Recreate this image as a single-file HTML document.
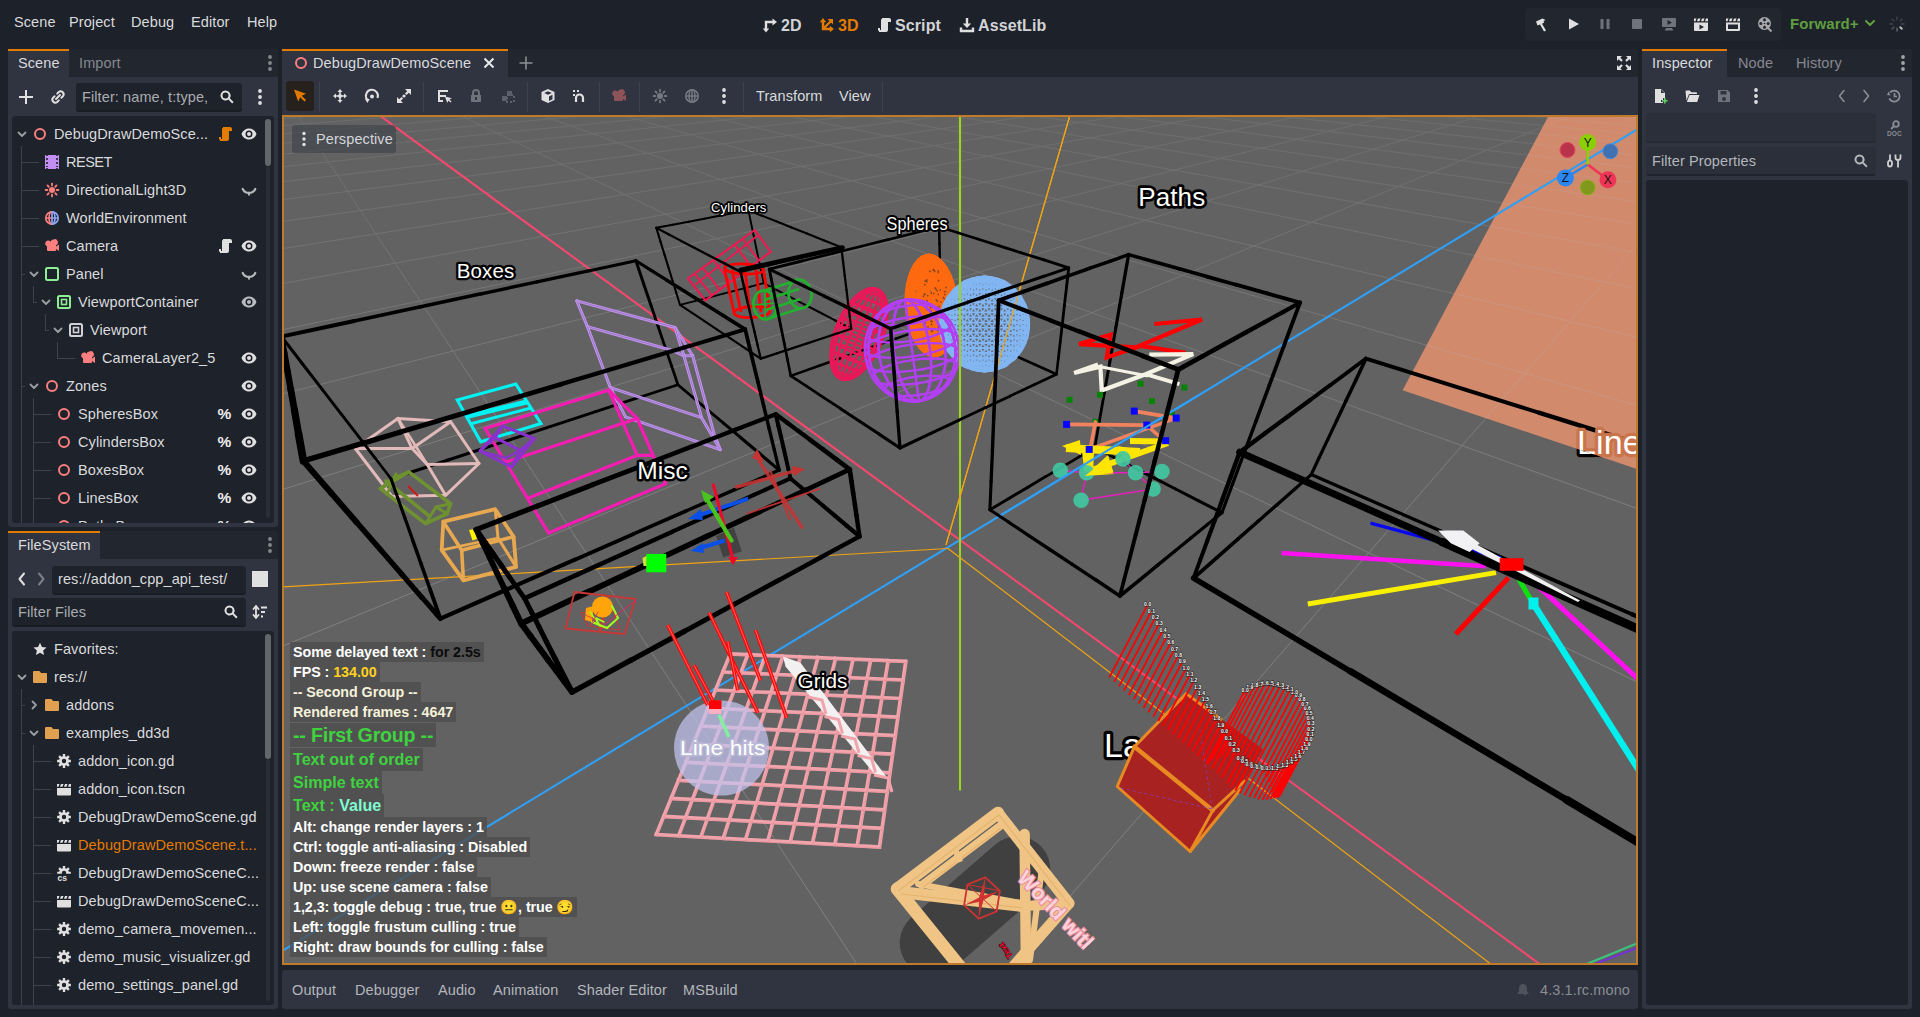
<!DOCTYPE html>
<html><head><meta charset="utf-8"><title>Godot</title><style>
*{box-sizing:border-box;margin:0;padding:0}
html,body{width:1920px;height:1017px;overflow:hidden;background:#1d2129;font-family:"Liberation Sans",sans-serif;font-size:14.500px;letter-spacing:.1px;color:#d9dadd}
.a{position:absolute}
.ic{position:absolute;overflow:visible}
.t{position:absolute;white-space:nowrap;line-height:20px;height:20px}
.dock{position:absolute;background:#2f3440;border-radius:3px}
.tabbar{position:absolute;background:#22262f;border-radius:3px 3px 0 0}
.tab{position:absolute;background:#2f3440;border-top:2px solid #e37b00}
.tree{position:absolute;background:#1e222a;border-radius:3px;overflow:hidden}
.inp{position:absolute;background:#1e222a;border-radius:3px;border-bottom:2px solid #191c23}
.ln{position:absolute;background:#3d424c}
.b{font-weight:700}
.emo{font-family:'Noto Color Emoji','Noto Emoji',sans-serif;font-weight:400;color:#f5c518}
.hud{position:absolute;white-space:nowrap;font-weight:700;font-size:14.600px;line-height:20px;height:20px;color:#fff;background:rgba(77,77,77,.8);padding:0 3px 0 3px}
.lbl{position:absolute;white-space:nowrap;color:#fff;font-weight:400;
 text-shadow:-2px 0 #000,2px 0 #000,0 -2px #000,0 2px #000,-1.500px -1.500px #000,1.500px -1.500px #000,-1.500px 1.500px #000,1.500px 1.500px #000,-1px -2px #000,1px -2px #000,-1px 2px #000,1px 2px #000,-2px -1px #000,2px -1px #000,-2px 1px #000,2px 1px #000}
</style></head><body>
<div class="t " style="left:14px;top:12px;">Scene</div>
<div class="t " style="left:69px;top:12px;">Project</div>
<div class="t " style="left:131px;top:12px;">Debug</div>
<div class="t " style="left:191px;top:12px;">Editor</div>
<div class="t " style="left:247px;top:12px;">Help</div>
<div class="t b" style="left:781px;top:15.5px;font-size:16px;color:#d2d3d6">2D</div>
<div class="t b" style="left:838px;top:15.5px;font-size:16px;color:#e37b00">3D</div>
<div class="t b" style="left:895px;top:15.5px;font-size:16px;color:#d2d3d6">Script</div>
<div class="t b" style="left:978px;top:15.5px;font-size:16px;color:#d2d3d6">AssetLib</div>
<svg class="ic" style="left:762px;top:17px" width="16" height="16" viewBox="0 0 16 16" ><path d="M4 12.500V5h7" fill="none" stroke="#e0e0e0" stroke-width="2.400"/><path d="M10.500 1.500l4.500 3.500-4.500 3.500z" fill="#e0e0e0"/><path d="M.8 11.500L4 15.500l3.200-4z" fill="#e0e0e0"/></svg>
<svg class="ic" style="left:819px;top:17px" width="16" height="16" viewBox="0 0 16 16" ><path d="M4 4v8h8" fill="none" stroke="#e37b00" stroke-width="2.400"/><path d="M4 12l7.500-7.500" stroke="#e37b00" stroke-width="2.400"/><path d="M.8 5.200L4 1l3.200 4.200zM10.800 8.800L15 12l-4.200 3.200zM8.500 2h5.500v5.500z" fill="#e37b00"/></svg>
<svg class="ic" style="left:876px;top:17px" width="16" height="16" viewBox="0 0 16 16" ><path d="M6 1v1a1 1 0 0 0-1 1v10H4v-2H2v2a1 1 0 0 0 .5.87 1 1 0 0 0 .5.13v1h7a2 2 0 0 0 2-2V5h3V3a2 2 0 0 0-2-2z" fill="#e0e0e0"/></svg>
<svg class="ic" style="left:959px;top:17px" width="16" height="16" viewBox="0 0 16 16" ><path d="M8 1v7" fill="none" stroke="#e0e0e0" stroke-width="2.400"/><path d="M3.800 6.500h8.400L8 11z" fill="#e0e0e0"/><path d="M2 10.500v3.500h12v-3.500" fill="none" stroke="#e0e0e0" stroke-width="2.400"/></svg>
<div class="a" style="left:1525px;top:8px;width:256px;height:33px;background:#22262f;border-radius:4px"></div>
<svg class="ic" style="left:1533px;top:16px" width="16" height="16" viewBox="0 0 16 16" ><path d="M3 5.500L9.500 2.500l3 1.500-2 1 .8 1.500-2.300 1.200L13 14.500 11 15.500 7 8.500 4.500 9.500z" fill="#e0e0e0"/></svg>
<svg class="ic" style="left:1565px;top:16px" width="16" height="16" viewBox="0 0 16 16" ><path d="M4 2.500v11l10-5.500z" fill="#e0e0e0"/></svg>
<svg class="ic" style="left:1597px;top:16px" width="16" height="16" viewBox="0 0 16 16" ><path d="M3.500 3h3v10h-3zM9.500 3h3v10h-3z" fill="#6f737b"/></svg>
<svg class="ic" style="left:1629px;top:16px" width="16" height="16" viewBox="0 0 16 16" ><rect x="3" y="3" width="10" height="10" rx="1" fill="#6f737b"/></svg>
<svg class="ic" style="left:1661px;top:16px" width="16" height="16" viewBox="0 0 16 16" ><path d="M2 2h12a1 1 0 0 1 1 1v7a1 1 0 0 1-1 1H2a1 1 0 0 1-1-1V3a1 1 0 0 1 1-1zm4.500 2v5L11 6.500zM5 12h6v1h1v1.500H4V13h1z" fill="#6f737b" fill-rule="evenodd"/></svg>
<svg class="ic" style="left:1693px;top:16px" width="16" height="16" viewBox="0 0 16 16" ><path d="M1 6.500h14V14a1 1 0 0 1-1 1H2a1 1 0 0 1-1-1zm5.500 2v5l4.500-2.500z" fill="#e0e0e0" fill-rule="evenodd"/><path d="M1 2.500h2.500l-1 2.800H1zM5 2.500h2.500l-1 2.800H4zM9 2.500h2.500l-1 2.800H8zM13 2.500h2v2.800h-3z" fill="#e0e0e0"/></svg>
<svg class="ic" style="left:1725px;top:16px" width="16" height="16" viewBox="0 0 16 16" ><path d="M1 6.500h14V14a1 1 0 0 1-1 1H2a1 1 0 0 1-1-1zm2 2v4.500h10V8.500z" fill="#e0e0e0" fill-rule="evenodd"/><path d="M1 2.500h2.500l-1 2.800H1zM5 2.500h2.500l-1 2.800H4zM9 2.500h2.500l-1 2.800H8zM13 2.500h2v2.800h-3z" fill="#e0e0e0"/></svg>
<svg class="ic" style="left:1757px;top:16px" width="16" height="16" viewBox="0 0 16 16" ><circle cx="7.500" cy="7.500" r="6.500" fill="#a4a6aa"/><g fill="#22262f"><circle cx="7.500" cy="3.800" r="1.500"/><circle cx="7.500" cy="11.200" r="1.500"/><circle cx="3.800" cy="7.500" r="1.500"/><circle cx="11.200" cy="7.500" r="1.500"/><circle cx="7.500" cy="7.500" r=".8"/></g><path d="M11 12l3.500 3.500" stroke="#a4a6aa" stroke-width="2"/></svg>
<div class="t b" style="left:1790px;top:14px;font-size:15px;color:#5f9e41">Forward+</div>
<svg class="ic" style="left:1862px;top:15px" width="16" height="16" viewBox="0 0 16 16" ><path d="M4 6l4 4 4-4" fill="none" stroke="#62a03f" stroke-width="2" stroke-linecap="round" stroke-linejoin="round"/></svg>
<svg class="ic" style="left:1889px;top:16px" width="16" height="16" viewBox="0 0 16 16" ><path d="M8.00 12.60L8.00 14.80" stroke="#50545c" stroke-width="2" stroke-linecap="round"/><path d="M11.25 11.25L12.81 12.81" stroke="#b8b8b8" stroke-width="2" stroke-linecap="round"/><path d="M12.60 8.00L14.80 8.00" stroke="#3a3e47" stroke-width="2" stroke-linecap="round"/><path d="M11.25 4.75L12.81 3.19" stroke="#343840" stroke-width="2" stroke-linecap="round"/><path d="M8.00 3.40L8.00 1.20" stroke="#343840" stroke-width="2" stroke-linecap="round"/><path d="M4.75 4.75L3.19 3.19" stroke="#343840" stroke-width="2" stroke-linecap="round"/><path d="M3.40 8.00L1.20 8.00" stroke="#3a3e47" stroke-width="2" stroke-linecap="round"/><path d="M4.75 11.25L3.19 12.81" stroke="#454950" stroke-width="2" stroke-linecap="round"/></svg>
<div class="dock" style="left:8px;top:49px;width:270px;height:478px;"></div>
<div class="tabbar" style="left:8px;top:49px;width:270px;height:28px;"></div>
<div class="tab" style="left:8px;top:49px;width:61px;height:28px;"></div>
<div class="t " style="left:18px;top:53px;">Scene</div>
<div class="t " style="left:79px;top:53px;color:#85888f">Import</div>
<svg class="ic" style="left:262px;top:55px" width="16" height="16" viewBox="0 0 16 16" ><circle cx="8" cy="2" r="1.900" fill="#85888f"/><circle cx="8" cy="8" r="1.900" fill="#85888f"/><circle cx="8" cy="14" r="1.900" fill="#85888f"/></svg>
<svg class="ic" style="left:18px;top:89px" width="16" height="16" viewBox="0 0 16 16" ><path d="M7 1v6H1v2h6v6h2V9h6V7H9V1z" fill="#e0e0e0"/></svg>
<svg class="ic" style="left:50px;top:89px" width="16" height="16" viewBox="0 0 16 16" ><g fill="none" stroke="#e0e0e0" stroke-width="2" stroke-linecap="round"><path d="M7.2 4.6l1.6-1.6a3 3 0 0 1 4.2 4.2l-1.6 1.6"/><path d="M8.8 11.4l-1.6 1.6a3 3 0 0 1-4.2-4.2l1.6-1.6"/><path d="M6 10l4-4"/></g></svg>
<div class="inp" style="left:76px;top:83px;width:166px;height:29px;"></div>
<div class="t " style="left:82px;top:87px;color:#a9acb1">Filter: name, t:type,</div>
<svg class="ic" style="left:219px;top:89px" width="16" height="16" viewBox="0 0 16 16" ><path d="M6.5 1.5a5 5 0 1 0 2.9 9.1l3.8 3.8 1.4-1.4-3.8-3.8a5 5 0 0 0-4.3-7.7zm0 2a3 3 0 1 1 0 6 3 3 0 0 1 0-6z" fill="#e0e0e0"/></svg>
<svg class="ic" style="left:252px;top:89px" width="16" height="16" viewBox="0 0 16 16" ><circle cx="8" cy="2" r="1.900" fill="#e0e0e0"/><circle cx="8" cy="8" r="1.900" fill="#e0e0e0"/><circle cx="8" cy="14" r="1.900" fill="#e0e0e0"/></svg>
<div class="tree" style="left:12px;top:116px;width:262px;height:407px">
<svg class="ic" style="left:2px;top:10px" width="16" height="16" viewBox="0 0 16 16" ><path d="M4.500 6.500L8 10l3.500-3.500" fill="none" stroke="#9a9da3" stroke-width="1.800" stroke-linecap="round" stroke-linejoin="round"/></svg>
<svg class="ic" style="left:20px;top:10px" width="16" height="16" viewBox="0 0 16 16" ><circle cx="8" cy="8" r="5" fill="none" stroke="#fc7f7f" stroke-width="2"/></svg>
<div class="t" style="left:42px;top:8px;">DebugDrawDemoSce...</div>
<svg class="ic" style="left:205px;top:10px" width="16" height="16" viewBox="0 0 16 16" ><path d="M6 1v1a1 1 0 0 0-1 1v10H4v-2H2v2a1 1 0 0 0 .5.87 1 1 0 0 0 .5.13v1h7a2 2 0 0 0 2-2V5h3V3a2 2 0 0 0-2-2z" fill="#e37b00"/></svg>
<svg class="ic" style="left:229px;top:10px" width="16" height="16" viewBox="0 0 16 16" ><path d="M8 2.5C4.4 2.500 1.500 5 .5 8c1 3 3.900 5.500 7.500 5.500s6.500-2.500 7.500-5.500c-1-3-3.900-5.500-7.500-5.500zm0 2a3.500 3.500 0 0 1 0 7 3.500 3.500 0 0 1 0-7zm0 1.500a2 2 0 0 0 0 4 2 2 0 0 0 0-4z" fill="#e0e0e0" fill-rule="evenodd"/></svg>
<svg class="ic" style="left:32px;top:38px" width="16" height="16" viewBox="0 0 16 16" ><path d="M1 1v14h1.200v-1h1.600v1h8.400v-1h1.600v1H15V1h-1.200v1h-1.600V1H3.800v1H2.200V1zm1.200 3h1.600v2H2.200zm10 0h1.600v2h-1.600zm-10 4h1.600v2H2.200zm10 0h1.600v2h-1.600zm-10 4h1.600v1H2.200zm10 0h1.600v1h-1.600z" fill="#c38ef1"/></svg>
<div class="t" style="left:54px;top:36px;"><span style="letter-spacing:-.5px">RESET</span></div>
<svg class="ic" style="left:32px;top:66px" width="16" height="16" viewBox="0 0 16 16" ><circle cx="8" cy="8" r="3" fill="#fc7f7f"/><path d="M12.60 8.00L14.40 8.00" stroke="#fc7f7f" stroke-width="1.800" stroke-linecap="round"/><path d="M11.25 11.25L12.53 12.53" stroke="#fc7f7f" stroke-width="1.800" stroke-linecap="round"/><path d="M8.00 12.60L8.00 14.40" stroke="#fc7f7f" stroke-width="1.800" stroke-linecap="round"/><path d="M4.75 11.25L3.47 12.53" stroke="#fc7f7f" stroke-width="1.800" stroke-linecap="round"/><path d="M3.40 8.00L1.60 8.00" stroke="#fc7f7f" stroke-width="1.800" stroke-linecap="round"/><path d="M4.75 4.75L3.47 3.47" stroke="#fc7f7f" stroke-width="1.800" stroke-linecap="round"/><path d="M8.00 3.40L8.00 1.60" stroke="#fc7f7f" stroke-width="1.800" stroke-linecap="round"/><path d="M11.25 4.75L12.53 3.47" stroke="#fc7f7f" stroke-width="1.800" stroke-linecap="round"/></svg>
<div class="t" style="left:54px;top:64px;">DirectionalLight3D</div>
<svg class="ic" style="left:229px;top:66px" width="16" height="16" viewBox="0 0 16 16" ><path d="M1.700 7c1.300 2.600 3.600 4 6.300 4s5-1.400 6.300-4" fill="none" stroke="#b5b7bb" stroke-width="2.200" stroke-linecap="round"/><path d="M8 10.500v2.200" stroke="#b5b7bb" stroke-width="2" stroke-linecap="round"/></svg>
<svg class="ic" style="left:32px;top:94px" width="16" height="16" viewBox="0 0 16 16" ><g fill="none" stroke-width="1.700"><path d="M8 1.800a6.200 6.200 0 0 0 0 12.400" stroke="#fc7f7f"/><path d="M8 1.800a6.200 6.200 0 0 1 0 12.400" stroke="#8da5f3"/><path d="M8 1.800a3 6.200 0 0 0 0 12.400" stroke="#fc7f7f"/><path d="M8 1.800a3 6.200 0 0 1 0 12.400" stroke="#8da5f3"/><path d="M1.800 8H8" stroke="#fc7f7f"/><path d="M8 8h6.200" stroke="#8da5f3"/><path d="M8 1.800v12.400" stroke="#8da5f3"/></g></svg>
<div class="t" style="left:54px;top:92px;">WorldEnvironment</div>
<svg class="ic" style="left:32px;top:122px" width="16" height="16" viewBox="0 0 16 16" ><path d="M9.5 1.500a3 3 0 0 0-2.900 2.300 3 3 0 1 0-3.600 4.500V12a1 1 0 0 0 1 1h7a1 1 0 0 0 1-1v-1l3 2V6.500l-3 2V7.200a3 3 0 0 0-2.500-5.700z" fill="#fc7f7f"/></svg>
<div class="t" style="left:54px;top:120px;">Camera</div>
<svg class="ic" style="left:205px;top:122px" width="16" height="16" viewBox="0 0 16 16" ><path d="M6 1v1a1 1 0 0 0-1 1v10H4v-2H2v2a1 1 0 0 0 .5.87 1 1 0 0 0 .5.13v1h7a2 2 0 0 0 2-2V5h3V3a2 2 0 0 0-2-2z" fill="#e0e0e0"/></svg>
<svg class="ic" style="left:229px;top:122px" width="16" height="16" viewBox="0 0 16 16" ><path d="M8 2.5C4.4 2.500 1.500 5 .5 8c1 3 3.900 5.500 7.500 5.500s6.500-2.500 7.500-5.500c-1-3-3.900-5.500-7.500-5.500zm0 2a3.500 3.500 0 0 1 0 7 3.500 3.500 0 0 1 0-7zm0 1.500a2 2 0 0 0 0 4 2 2 0 0 0 0-4z" fill="#e0e0e0" fill-rule="evenodd"/></svg>
<svg class="ic" style="left:14px;top:150px" width="16" height="16" viewBox="0 0 16 16" ><path d="M4.500 6.500L8 10l3.500-3.500" fill="none" stroke="#9a9da3" stroke-width="1.800" stroke-linecap="round" stroke-linejoin="round"/></svg>
<svg class="ic" style="left:32px;top:150px" width="16" height="16" viewBox="0 0 16 16" ><rect x="2" y="2" width="12" height="12" rx="1.500" fill="none" stroke="#8eef97" stroke-width="2"/></svg>
<div class="t" style="left:54px;top:148px;">Panel</div>
<svg class="ic" style="left:229px;top:150px" width="16" height="16" viewBox="0 0 16 16" ><path d="M1.700 7c1.300 2.600 3.600 4 6.300 4s5-1.400 6.300-4" fill="none" stroke="#b5b7bb" stroke-width="2.200" stroke-linecap="round"/><path d="M8 10.500v2.200" stroke="#b5b7bb" stroke-width="2" stroke-linecap="round"/></svg>
<svg class="ic" style="left:26px;top:178px" width="16" height="16" viewBox="0 0 16 16" ><path d="M4.500 6.500L8 10l3.500-3.500" fill="none" stroke="#9a9da3" stroke-width="1.800" stroke-linecap="round" stroke-linejoin="round"/></svg>
<svg class="ic" style="left:44px;top:178px" width="16" height="16" viewBox="0 0 16 16" ><rect x="2" y="2" width="12" height="12" rx="1.500" fill="none" stroke="#8eef97" stroke-width="2"/><rect x="5.500" y="5.500" width="5" height="5" fill="none" stroke="#8eef97" stroke-width="1.600"/></svg>
<div class="t" style="left:66px;top:176px;">ViewportContainer</div>
<svg class="ic" style="left:229px;top:178px" width="16" height="16" viewBox="0 0 16 16" ><path d="M8 2.5C4.4 2.500 1.500 5 .5 8c1 3 3.900 5.500 7.500 5.500s6.500-2.500 7.500-5.500c-1-3-3.900-5.500-7.500-5.500zm0 2a3.500 3.500 0 0 1 0 7 3.500 3.500 0 0 1 0-7zm0 1.500a2 2 0 0 0 0 4 2 2 0 0 0 0-4z" fill="#b9bbbf" fill-rule="evenodd"/></svg>
<svg class="ic" style="left:38px;top:206px" width="16" height="16" viewBox="0 0 16 16" ><path d="M4.500 6.500L8 10l3.500-3.500" fill="none" stroke="#9a9da3" stroke-width="1.800" stroke-linecap="round" stroke-linejoin="round"/></svg>
<svg class="ic" style="left:56px;top:206px" width="16" height="16" viewBox="0 0 16 16" ><rect x="2" y="2" width="12" height="12" rx="1.500" fill="none" stroke="#d0d2d6" stroke-width="2"/><rect x="5.500" y="5.500" width="5" height="5" fill="none" stroke="#d0d2d6" stroke-width="1.600"/></svg>
<div class="t" style="left:78px;top:204px;">Viewport</div>
<svg class="ic" style="left:68px;top:234px" width="16" height="16" viewBox="0 0 16 16" ><path d="M9.5 1.500a3 3 0 0 0-2.900 2.300 3 3 0 1 0-3.600 4.500V12a1 1 0 0 0 1 1h7a1 1 0 0 0 1-1v-1l3 2V6.500l-3 2V7.200a3 3 0 0 0-2.500-5.700z" fill="#fc7f7f"/></svg>
<div class="t" style="left:90px;top:232px;">CameraLayer2_5</div>
<svg class="ic" style="left:229px;top:234px" width="16" height="16" viewBox="0 0 16 16" ><path d="M8 2.5C4.4 2.500 1.500 5 .5 8c1 3 3.900 5.500 7.500 5.500s6.500-2.500 7.500-5.500c-1-3-3.900-5.500-7.500-5.500zm0 2a3.500 3.500 0 0 1 0 7 3.500 3.500 0 0 1 0-7zm0 1.500a2 2 0 0 0 0 4 2 2 0 0 0 0-4z" fill="#e0e0e0" fill-rule="evenodd"/></svg>
<svg class="ic" style="left:14px;top:262px" width="16" height="16" viewBox="0 0 16 16" ><path d="M4.500 6.500L8 10l3.500-3.500" fill="none" stroke="#9a9da3" stroke-width="1.800" stroke-linecap="round" stroke-linejoin="round"/></svg>
<svg class="ic" style="left:32px;top:262px" width="16" height="16" viewBox="0 0 16 16" ><circle cx="8" cy="8" r="5" fill="none" stroke="#fc7f7f" stroke-width="2"/></svg>
<div class="t" style="left:54px;top:260px;">Zones</div>
<svg class="ic" style="left:229px;top:262px" width="16" height="16" viewBox="0 0 16 16" ><path d="M8 2.5C4.4 2.500 1.500 5 .5 8c1 3 3.900 5.500 7.500 5.500s6.500-2.500 7.500-5.500c-1-3-3.900-5.500-7.500-5.500zm0 2a3.500 3.500 0 0 1 0 7 3.500 3.500 0 0 1 0-7zm0 1.500a2 2 0 0 0 0 4 2 2 0 0 0 0-4z" fill="#e0e0e0" fill-rule="evenodd"/></svg>
<svg class="ic" style="left:44px;top:290px" width="16" height="16" viewBox="0 0 16 16" ><circle cx="8" cy="8" r="5" fill="none" stroke="#fc7f7f" stroke-width="2"/></svg>
<div class="t" style="left:66px;top:288px;">SpheresBox</div>
<svg class="ic" style="left:229px;top:290px" width="16" height="16" viewBox="0 0 16 16" ><path d="M8 2.5C4.4 2.500 1.500 5 .5 8c1 3 3.900 5.500 7.500 5.500s6.500-2.500 7.500-5.500c-1-3-3.900-5.500-7.500-5.500zm0 2a3.500 3.500 0 0 1 0 7 3.500 3.500 0 0 1 0-7zm0 1.500a2 2 0 0 0 0 4 2 2 0 0 0 0-4z" fill="#e0e0e0" fill-rule="evenodd"/></svg>
<div class="t" style="left:205.5px;top:288px;font-size:15.500px;color:#ececec;font-weight:700;letter-spacing:0">%</div>
<svg class="ic" style="left:44px;top:318px" width="16" height="16" viewBox="0 0 16 16" ><circle cx="8" cy="8" r="5" fill="none" stroke="#fc7f7f" stroke-width="2"/></svg>
<div class="t" style="left:66px;top:316px;">CylindersBox</div>
<svg class="ic" style="left:229px;top:318px" width="16" height="16" viewBox="0 0 16 16" ><path d="M8 2.5C4.4 2.500 1.500 5 .5 8c1 3 3.900 5.500 7.500 5.500s6.500-2.500 7.500-5.500c-1-3-3.900-5.500-7.500-5.500zm0 2a3.500 3.500 0 0 1 0 7 3.500 3.500 0 0 1 0-7zm0 1.500a2 2 0 0 0 0 4 2 2 0 0 0 0-4z" fill="#e0e0e0" fill-rule="evenodd"/></svg>
<div class="t" style="left:205.5px;top:316px;font-size:15.500px;color:#ececec;font-weight:700;letter-spacing:0">%</div>
<svg class="ic" style="left:44px;top:346px" width="16" height="16" viewBox="0 0 16 16" ><circle cx="8" cy="8" r="5" fill="none" stroke="#fc7f7f" stroke-width="2"/></svg>
<div class="t" style="left:66px;top:344px;">BoxesBox</div>
<svg class="ic" style="left:229px;top:346px" width="16" height="16" viewBox="0 0 16 16" ><path d="M8 2.5C4.4 2.500 1.500 5 .5 8c1 3 3.900 5.500 7.500 5.500s6.500-2.500 7.500-5.500c-1-3-3.900-5.500-7.500-5.500zm0 2a3.500 3.500 0 0 1 0 7 3.500 3.500 0 0 1 0-7zm0 1.500a2 2 0 0 0 0 4 2 2 0 0 0 0-4z" fill="#e0e0e0" fill-rule="evenodd"/></svg>
<div class="t" style="left:205.5px;top:344px;font-size:15.500px;color:#ececec;font-weight:700;letter-spacing:0">%</div>
<svg class="ic" style="left:44px;top:374px" width="16" height="16" viewBox="0 0 16 16" ><circle cx="8" cy="8" r="5" fill="none" stroke="#fc7f7f" stroke-width="2"/></svg>
<div class="t" style="left:66px;top:372px;">LinesBox</div>
<svg class="ic" style="left:229px;top:374px" width="16" height="16" viewBox="0 0 16 16" ><path d="M8 2.5C4.4 2.500 1.500 5 .5 8c1 3 3.900 5.500 7.500 5.500s6.500-2.500 7.500-5.500c-1-3-3.900-5.500-7.500-5.500zm0 2a3.500 3.500 0 0 1 0 7 3.500 3.500 0 0 1 0-7zm0 1.500a2 2 0 0 0 0 4 2 2 0 0 0 0-4z" fill="#e0e0e0" fill-rule="evenodd"/></svg>
<div class="t" style="left:205.5px;top:372px;font-size:15.500px;color:#ececec;font-weight:700;letter-spacing:0">%</div>
<svg class="ic" style="left:44px;top:402px" width="16" height="16" viewBox="0 0 16 16" ><circle cx="8" cy="8" r="5" fill="none" stroke="#fc7f7f" stroke-width="2"/></svg>
<div class="t" style="left:66px;top:400px;">PathsBox</div>
<svg class="ic" style="left:229px;top:402px" width="16" height="16" viewBox="0 0 16 16" ><path d="M8 2.5C4.4 2.500 1.500 5 .5 8c1 3 3.900 5.500 7.500 5.500s6.500-2.500 7.500-5.500c-1-3-3.900-5.500-7.500-5.500zm0 2a3.500 3.500 0 0 1 0 7 3.500 3.500 0 0 1 0-7zm0 1.500a2 2 0 0 0 0 4 2 2 0 0 0 0-4z" fill="#e0e0e0" fill-rule="evenodd"/></svg>
<div class="t" style="left:205.5px;top:400px;font-size:15.500px;color:#ececec;font-weight:700;letter-spacing:0">%</div>
<div class="ln" style="left:9px;top:30px;width:1px;height:377px"></div>
<div class="ln" style="left:9px;top:46px;width:18px;height:1px"></div>
<div class="ln" style="left:9px;top:74px;width:18px;height:1px"></div>
<div class="ln" style="left:9px;top:102px;width:18px;height:1px"></div>
<div class="ln" style="left:9px;top:130px;width:18px;height:1px"></div>
<div class="ln" style="left:9px;top:158px;width:4px;height:1px"></div>
<div class="ln" style="left:9px;top:270px;width:4px;height:1px"></div>
<div class="ln" style="left:21px;top:170px;width:1px;height:16px"></div>
<div class="ln" style="left:21px;top:186px;width:4px;height:1px"></div>
<div class="ln" style="left:33px;top:198px;width:1px;height:16px"></div>
<div class="ln" style="left:33px;top:214px;width:4px;height:1px"></div>
<div class="ln" style="left:45px;top:226px;width:1px;height:16px"></div>
<div class="ln" style="left:45px;top:242px;width:18px;height:1px"></div>
<div class="ln" style="left:21px;top:282px;width:1px;height:125px"></div>
<div class="ln" style="left:21px;top:298px;width:18px;height:1px"></div>
<div class="ln" style="left:21px;top:326px;width:18px;height:1px"></div>
<div class="ln" style="left:21px;top:354px;width:18px;height:1px"></div>
<div class="ln" style="left:21px;top:382px;width:18px;height:1px"></div>
<div class="ln" style="left:21px;top:410px;width:18px;height:1px"></div>
<div class="a" style="left:253px;top:3px;width:6px;height:47px;background:#62656c;border-radius:3px"></div>
<div class="a" style="left:254px;top:50px;width:4px;height:352px;background:#2a2e37;border-radius:2px"></div>
</div>
<div class="dock" style="left:8px;top:531px;width:270px;height:478px;"></div>
<div class="tabbar" style="left:8px;top:531px;width:270px;height:28px;"></div>
<div class="tab" style="left:8px;top:531px;width:92px;height:28px;"></div>
<div class="t " style="left:18px;top:535px;">FileSystem</div>
<svg class="ic" style="left:262px;top:537px" width="16" height="16" viewBox="0 0 16 16" ><circle cx="8" cy="2" r="1.900" fill="#85888f"/><circle cx="8" cy="8" r="1.900" fill="#85888f"/><circle cx="8" cy="14" r="1.900" fill="#85888f"/></svg>
<svg class="ic" style="left:14px;top:571px" width="16" height="16" viewBox="0 0 16 16" ><path d="M10 2.500L5.500 8l4.500 5.500" fill="none" stroke="#e0e0e0" stroke-width="2" stroke-linecap="round" stroke-linejoin="round"/></svg>
<svg class="ic" style="left:33px;top:571px" width="16" height="16" viewBox="0 0 16 16" ><path d="M6 2.500L10.500 8 6 13.500" fill="none" stroke="#7b7e85" stroke-width="2" stroke-linecap="round" stroke-linejoin="round"/></svg>
<div class="inp" style="left:52px;top:566px;width:194px;height:29px;"></div>
<div class="t " style="left:58px;top:569px;">res://addon_cpp_api_test/</div>
<div class="a" style="left:252px;top:571px;width:16px;height:16px;background:#e0e0e0"></div>
<div class="inp" style="left:12px;top:598px;width:234px;height:29px;"></div>
<div class="t " style="left:18px;top:602px;color:#a9acb1">Filter Files</div>
<svg class="ic" style="left:223px;top:604px" width="16" height="16" viewBox="0 0 16 16" ><path d="M6.5 1.5a5 5 0 1 0 2.9 9.1l3.8 3.8 1.4-1.4-3.8-3.8a5 5 0 0 0-4.3-7.7zm0 2a3 3 0 1 1 0 6 3 3 0 0 1 0-6z" fill="#e0e0e0"/></svg>
<svg class="ic" style="left:252px;top:604px" width="16" height="16" viewBox="0 0 16 16" ><path d="M4 2v12M1.500 5L4 2l2.500 3M1.500 11L4 14l2.500-3" fill="none" stroke="#e0e0e0" stroke-width="1.800" stroke-linecap="round" stroke-linejoin="round"/><path d="M9 3.500h6M9 8h4M9 12.500h2" stroke="#e0e0e0" stroke-width="1.800"/></svg>
<div class="tree" style="left:12px;top:631px;width:262px;height:374px">
<svg class="ic" style="left:20px;top:10px" width="16" height="16" viewBox="0 0 16 16" ><path d="M8 1.700l1.950 4.200 4.550.500-3.400 3.100.950 4.500L8 11.700 3.950 14l.950-4.500-3.400-3.100 4.550-.500z" fill="#e0e0e0"/></svg>
<div class="t" style="left:42px;top:8px;">Favorites:</div>
<svg class="ic" style="left:2px;top:38px" width="16" height="16" viewBox="0 0 16 16" ><path d="M4.500 6.500L8 10l3.500-3.500" fill="none" stroke="#9a9da3" stroke-width="1.800" stroke-linecap="round" stroke-linejoin="round"/></svg>
<svg class="ic" style="left:20px;top:38px" width="16" height="16" viewBox="0 0 16 16" ><path d="M2 2a1 1 0 0 0-1 1v10a1 1 0 0 0 1 1h12a1 1 0 0 0 1-1V5a1 1 0 0 0-1-1H9L8 2.400A1 1 0 0 0 7.200 2z" fill="#e0a050"/></svg>
<div class="t" style="left:42px;top:36px;">res://</div>
<svg class="ic" style="left:14px;top:66px" width="16" height="16" viewBox="0 0 16 16" ><path d="M6.500 4.500L10 8l-3.500 3.500" fill="none" stroke="#9a9da3" stroke-width="1.800" stroke-linecap="round" stroke-linejoin="round"/></svg>
<svg class="ic" style="left:32px;top:66px" width="16" height="16" viewBox="0 0 16 16" ><path d="M2 2a1 1 0 0 0-1 1v10a1 1 0 0 0 1 1h12a1 1 0 0 0 1-1V5a1 1 0 0 0-1-1H9L8 2.400A1 1 0 0 0 7.200 2z" fill="#e0a050"/></svg>
<div class="t" style="left:54px;top:64px;">addons</div>
<svg class="ic" style="left:14px;top:94px" width="16" height="16" viewBox="0 0 16 16" ><path d="M4.500 6.500L8 10l3.500-3.500" fill="none" stroke="#9a9da3" stroke-width="1.800" stroke-linecap="round" stroke-linejoin="round"/></svg>
<svg class="ic" style="left:32px;top:94px" width="16" height="16" viewBox="0 0 16 16" ><path d="M2 2a1 1 0 0 0-1 1v10a1 1 0 0 0 1 1h12a1 1 0 0 0 1-1V5a1 1 0 0 0-1-1H9L8 2.400A1 1 0 0 0 7.200 2z" fill="#e0a050"/></svg>
<div class="t" style="left:54px;top:92px;">examples_dd3d</div>
<svg class="ic" style="left:44px;top:122px" width="16" height="16" viewBox="0 0 16 16" ><path d="M14.90 6.80L14.90 9.20L12.86 9.17L12.26 10.61L13.73 12.03L12.03 13.73L10.61 12.26L9.17 12.86L9.20 14.90L6.80 14.90L6.83 12.86L5.39 12.26L3.97 13.73L2.27 12.03L3.74 10.61L3.14 9.17L1.10 9.20L1.10 6.80L3.14 6.83L3.74 5.39L2.27 3.97L3.97 2.27L5.39 3.74L6.83 3.14L6.80 1.10L9.20 1.10L9.17 3.14L10.61 3.74L12.03 2.27L13.73 3.97L12.26 5.39L12.86 6.83zM8 5.800a2.200 2.200 0 0 1 0 4.400 2.200 2.200 0 0 1 0-4.400z" fill="#e0e0e0" fill-rule="evenodd"/></svg>
<div class="t" style="left:66px;top:120px;">addon_icon.gd</div>
<div class="ln" style="left:21px;top:130px;width:18px;height:1px"></div>
<svg class="ic" style="left:44px;top:150px" width="16" height="16" viewBox="0 0 16 16" ><path d="M1 7h14v6.500a1 1 0 0 1-1 1H2a1 1 0 0 1-1-1z" fill="#e0e0e0"/><path d="M1 3h2.500l-1 2.800H1zM5 3h2.500l-1 2.800H4zM9 3h2.500l-1 2.800H8zM13 3h2v2.800h-3z" fill="#e0e0e0"/></svg>
<div class="t" style="left:66px;top:148px;">addon_icon.tscn</div>
<div class="ln" style="left:21px;top:158px;width:18px;height:1px"></div>
<svg class="ic" style="left:44px;top:178px" width="16" height="16" viewBox="0 0 16 16" ><path d="M14.90 6.80L14.90 9.20L12.86 9.17L12.26 10.61L13.73 12.03L12.03 13.73L10.61 12.26L9.17 12.86L9.20 14.90L6.80 14.90L6.83 12.86L5.39 12.26L3.97 13.73L2.27 12.03L3.74 10.61L3.14 9.17L1.10 9.20L1.10 6.80L3.14 6.83L3.74 5.39L2.27 3.97L3.97 2.27L5.39 3.74L6.83 3.14L6.80 1.10L9.20 1.10L9.17 3.14L10.61 3.74L12.03 2.27L13.73 3.97L12.26 5.39L12.86 6.83zM8 5.800a2.200 2.200 0 0 1 0 4.400 2.200 2.200 0 0 1 0-4.400z" fill="#e0e0e0" fill-rule="evenodd"/></svg>
<div class="t" style="left:66px;top:176px;">DebugDrawDemoScene.gd</div>
<div class="ln" style="left:21px;top:186px;width:18px;height:1px"></div>
<svg class="ic" style="left:44px;top:206px" width="16" height="16" viewBox="0 0 16 16" ><path d="M1 7h14v6.500a1 1 0 0 1-1 1H2a1 1 0 0 1-1-1z" fill="#e0e0e0"/><path d="M1 3h2.500l-1 2.800H1zM5 3h2.500l-1 2.800H4zM9 3h2.500l-1 2.800H8zM13 3h2v2.800h-3z" fill="#e0e0e0"/></svg>
<div class="t" style="left:66px;top:204px;color:#e37b00">DebugDrawDemoScene.t...</div>
<div class="ln" style="left:21px;top:214px;width:18px;height:1px"></div>
<svg class="ic" style="left:44px;top:234px" width="16" height="16" viewBox="0 0 16 16" ><g clip-path="inset(0 0 45% 0)"><path d="M14.90 6.80L14.90 9.20L12.86 9.17L12.26 10.61L13.73 12.03L12.03 13.73L10.61 12.26L9.17 12.86L9.20 14.90L6.80 14.90L6.83 12.86L5.39 12.26L3.97 13.73L2.27 12.03L3.74 10.61L3.14 9.17L1.10 9.20L1.10 6.80L3.14 6.83L3.74 5.39L2.27 3.97L3.97 2.27L5.39 3.74L6.83 3.14L6.80 1.10L9.20 1.10L9.17 3.14L10.61 3.74L12.03 2.27L13.73 3.97L12.26 5.39L12.86 6.83zM8 5.800a2.200 2.200 0 0 1 0 4.400 2.200 2.200 0 0 1 0-4.400z" fill="#e0e0e0" fill-rule="evenodd"/></g><text x="1.500" y="15.500" font-family="Liberation Sans, sans-serif" font-weight="700" font-size="8.500" fill="#e0e0e0">cs</text></svg>
<div class="t" style="left:66px;top:232px;">DebugDrawDemoSceneC...</div>
<div class="ln" style="left:21px;top:242px;width:18px;height:1px"></div>
<svg class="ic" style="left:44px;top:262px" width="16" height="16" viewBox="0 0 16 16" ><path d="M1 7h14v6.500a1 1 0 0 1-1 1H2a1 1 0 0 1-1-1z" fill="#e0e0e0"/><path d="M1 3h2.500l-1 2.800H1zM5 3h2.500l-1 2.800H4zM9 3h2.500l-1 2.800H8zM13 3h2v2.800h-3z" fill="#e0e0e0"/></svg>
<div class="t" style="left:66px;top:260px;">DebugDrawDemoSceneC...</div>
<div class="ln" style="left:21px;top:270px;width:18px;height:1px"></div>
<svg class="ic" style="left:44px;top:290px" width="16" height="16" viewBox="0 0 16 16" ><path d="M14.90 6.80L14.90 9.20L12.86 9.17L12.26 10.61L13.73 12.03L12.03 13.73L10.61 12.26L9.17 12.86L9.20 14.90L6.80 14.90L6.83 12.86L5.39 12.26L3.97 13.73L2.27 12.03L3.74 10.61L3.14 9.17L1.10 9.20L1.10 6.80L3.14 6.83L3.74 5.39L2.27 3.97L3.97 2.27L5.39 3.74L6.83 3.14L6.80 1.10L9.20 1.10L9.17 3.14L10.61 3.74L12.03 2.27L13.73 3.97L12.26 5.39L12.86 6.83zM8 5.800a2.200 2.200 0 0 1 0 4.400 2.200 2.200 0 0 1 0-4.400z" fill="#e0e0e0" fill-rule="evenodd"/></svg>
<div class="t" style="left:66px;top:288px;">demo_camera_movemen...</div>
<div class="ln" style="left:21px;top:298px;width:18px;height:1px"></div>
<svg class="ic" style="left:44px;top:318px" width="16" height="16" viewBox="0 0 16 16" ><path d="M14.90 6.80L14.90 9.20L12.86 9.17L12.26 10.61L13.73 12.03L12.03 13.73L10.61 12.26L9.17 12.86L9.20 14.90L6.80 14.90L6.83 12.86L5.39 12.26L3.97 13.73L2.27 12.03L3.74 10.61L3.14 9.17L1.10 9.20L1.10 6.80L3.14 6.83L3.74 5.39L2.27 3.97L3.97 2.27L5.39 3.74L6.83 3.14L6.80 1.10L9.20 1.10L9.17 3.14L10.61 3.74L12.03 2.27L13.73 3.97L12.26 5.39L12.86 6.83zM8 5.800a2.200 2.200 0 0 1 0 4.400 2.200 2.200 0 0 1 0-4.400z" fill="#e0e0e0" fill-rule="evenodd"/></svg>
<div class="t" style="left:66px;top:316px;">demo_music_visualizer.gd</div>
<div class="ln" style="left:21px;top:326px;width:18px;height:1px"></div>
<svg class="ic" style="left:44px;top:346px" width="16" height="16" viewBox="0 0 16 16" ><path d="M14.90 6.80L14.90 9.20L12.86 9.17L12.26 10.61L13.73 12.03L12.03 13.73L10.61 12.26L9.17 12.86L9.20 14.90L6.80 14.90L6.83 12.86L5.39 12.26L3.97 13.73L2.27 12.03L3.74 10.61L3.14 9.17L1.10 9.20L1.10 6.80L3.14 6.83L3.74 5.39L2.27 3.97L3.97 2.27L5.39 3.74L6.83 3.14L6.80 1.10L9.20 1.10L9.17 3.14L10.61 3.74L12.03 2.27L13.73 3.97L12.26 5.39L12.86 6.83zM8 5.800a2.200 2.200 0 0 1 0 4.400 2.200 2.200 0 0 1 0-4.400z" fill="#e0e0e0" fill-rule="evenodd"/></svg>
<div class="t" style="left:66px;top:344px;">demo_settings_panel.gd</div>
<div class="ln" style="left:21px;top:354px;width:18px;height:1px"></div>
<div class="ln" style="left:9px;top:58px;width:1px;height:316px"></div>
<div class="ln" style="left:9px;top:74px;width:4px;height:1px"></div>
<div class="ln" style="left:9px;top:102px;width:4px;height:1px"></div>
<div class="ln" style="left:21px;top:114px;width:1px;height:260px"></div>
<div class="a" style="left:253px;top:3px;width:6px;height:125px;background:#62656c;border-radius:3px"></div>
<div class="a" style="left:254px;top:128px;width:4px;height:242px;background:#2a2e37;border-radius:2px"></div>
</div>
<div class="tabbar" style="left:282px;top:49px;width:1356px;height:28px;"></div>
<div class="tab" style="left:282px;top:49px;width:226px;height:28px;"></div>
<svg class="ic" style="left:293px;top:55px" width="16" height="16" viewBox="0 0 16 16" ><circle cx="8" cy="8" r="5" fill="none" stroke="#fc7f7f" stroke-width="2"/></svg>
<div class="t " style="left:313px;top:53px;">DebugDrawDemoScene</div>
<svg class="ic" style="left:481px;top:55px" width="16" height="16" viewBox="0 0 16 16" ><path d="M3.500 3.500l9 9M12.500 3.500l-9 9" stroke="#e8e8e8" stroke-width="2"/></svg>
<svg class="ic" style="left:518px;top:55px" width="16" height="16" viewBox="0 0 16 16" ><path d="M8 1.500v13M1.500 8h13" stroke="#8b8e95" stroke-width="1.600"/></svg>
<svg class="ic" style="left:1616px;top:55px" width="16" height="16" viewBox="0 0 16 16" ><path d="M1.500 6V1.500H6M10 1.500h4.500V6M14.500 10v4.500H10M6 14.500H1.500V10" fill="none" stroke="#e0e0e0" stroke-width="0"/><path d="M1 1h5L4.300 2.700 6.800 5.200 5.200 6.800 2.700 4.300 1 6zM15 1v5l-1.700-1.700-2.500 2.500-1.600-1.600 2.500-2.500L10 1zM1 15v-5l1.700 1.700 2.500-2.500 1.600 1.600-2.500 2.500L6 15zM15 15h-5l1.700-1.700-2.500-2.500 1.600-1.600 2.500 2.500L15 10z" fill="#e0e0e0"/></svg>
<div class="a" style="left:282px;top:77px;width:1356px;height:39px;background:#2f3440"></div>
<div class="a" style="left:286px;top:81px;width:28px;height:30px;background:#27211e;border-radius:3px"></div>
<svg class="ic" style="left:292px;top:88px" width="16" height="16" viewBox="0 0 16 16" ><path d="M2 1.500l4.200 12 2-4.300 4.300 4.300 1.500-1.500-4.300-4.300 4.300-2z" fill="#e37b00"/></svg>
<div class="a" style="left:319px;top:82px;width:1px;height:30px;background:#3c414d"></div>
<div class="a" style="left:423px;top:82px;width:1px;height:30px;background:#3c414d"></div>
<div class="a" style="left:527px;top:82px;width:1px;height:30px;background:#3c414d"></div>
<div class="a" style="left:599px;top:82px;width:1px;height:30px;background:#3c414d"></div>
<div class="a" style="left:639px;top:82px;width:1px;height:30px;background:#3c414d"></div>
<div class="a" style="left:743px;top:82px;width:1px;height:30px;background:#3c414d"></div>
<div class="a" style="left:882px;top:82px;width:1px;height:30px;background:#3c414d"></div>
<svg class="ic" style="left:332px;top:88px" width="16" height="16" viewBox="0 0 16 16" ><path d="M8 1L5.500 4h5zM8 15l-2.500-3h5zM1 8l3-2.500v5zM15 8l-3-2.500v5z" fill="#e0e0e0"/><path d="M8 3.500v9M3.500 8h9" stroke="#e0e0e0" stroke-width="1.600"/><circle cx="8" cy="8" r="2" fill="#e0e0e0"/></svg>
<svg class="ic" style="left:364px;top:88px" width="16" height="16" viewBox="0 0 16 16" ><path d="M3.200 11.500A6 6 0 1 1 13.500 10" fill="none" stroke="#e0e0e0" stroke-width="2"/><path d="M.8 10.500l5 .5-2.500 4z" fill="#e0e0e0"/><circle cx="8" cy="8.500" r="2" fill="#e0e0e0"/></svg>
<svg class="ic" style="left:396px;top:88px" width="16" height="16" viewBox="0 0 16 16" ><path d="M9 1h6v6l-2.200-2.200-2.300 2.300-1.600-1.600 2.300-2.300zM7 15H1V9l2.200 2.200 2.300-2.300 1.600 1.600-2.300 2.300z" fill="#e0e0e0"/><circle cx="8" cy="8" r="1.600" fill="#e0e0e0"/></svg>
<svg class="ic" style="left:436px;top:88px" width="16" height="16" viewBox="0 0 16 16" ><path d="M2 2h10v2H4v3h6v2H4v3h3v2H2z" fill="#e0e0e0"/><path d="M9 8.500l2.200 6.500 1.200-2.500 2.100 2.100 1-1-2.100-2.100 2.500-1.200z" fill="#e0e0e0"/></svg>
<svg class="ic" style="left:468px;top:88px" width="16" height="16" viewBox="0 0 16 16" ><path d="M3 7h10v7H3z" fill="#6e727b"/><path d="M5 7V5a3 3 0 0 1 6 0v2" fill="none" stroke="#6e727b" stroke-width="2"/><rect x="7" y="9" width="2" height="3" fill="#2f3440"/></svg>
<svg class="ic" style="left:500px;top:88px" width="16" height="16" viewBox="0 0 16 16" ><path d="M7 7h7v7H7z" fill="none" stroke="#5c606a" stroke-width="2" stroke-dasharray="2 2"/><path d="M2 8h5v5H2zM7 3h5v5H7z" fill="#5c606a"/></svg>
<svg class="ic" style="left:540px;top:88px" width="16" height="16" viewBox="0 0 16 16" ><path d="M8 1L1.500 4v8L8 15l6.500-3V4zM8 3.200l3.800 1.800L8 6.800 4.200 5zM9 8.500l3.500-1.700v4.400L9 12.900z" fill="#e0e0e0" fill-rule="evenodd"/></svg>
<svg class="ic" style="left:572px;top:88px" width="16" height="16" viewBox="0 0 16 16" ><path d="M4 14V10a3.500 3.500 0 0 1 7 0v4" fill="none" stroke="#e0e0e0" stroke-width="2.200"/><path d="M1 2h2v2H1zM5 2h2v2H5zM1 6h2v2H1z" fill="#e0e0e0"/></svg>
<svg class="ic" style="left:611px;top:88px" width="16" height="16" viewBox="0 0 16 16" ><path d="M9.5 1.500a3 3 0 0 0-2.900 2.300 3 3 0 1 0-3.600 4.500V12a1 1 0 0 0 1 1h7a1 1 0 0 0 1-1v-1l3 2V6.500l-3 2V7.200a3 3 0 0 0-2.500-5.700z" fill="#8d5358"/></svg>
<svg class="ic" style="left:652px;top:88px" width="16" height="16" viewBox="0 0 16 16" ><circle cx="8" cy="8" r="3" fill="#747881"/><path d="M12.60 8.00L14.40 8.00" stroke="#747881" stroke-width="1.800" stroke-linecap="round"/><path d="M11.25 11.25L12.53 12.53" stroke="#747881" stroke-width="1.800" stroke-linecap="round"/><path d="M8.00 12.60L8.00 14.40" stroke="#747881" stroke-width="1.800" stroke-linecap="round"/><path d="M4.75 11.25L3.47 12.53" stroke="#747881" stroke-width="1.800" stroke-linecap="round"/><path d="M3.40 8.00L1.60 8.00" stroke="#747881" stroke-width="1.800" stroke-linecap="round"/><path d="M4.75 4.75L3.47 3.47" stroke="#747881" stroke-width="1.800" stroke-linecap="round"/><path d="M8.00 3.40L8.00 1.60" stroke="#747881" stroke-width="1.800" stroke-linecap="round"/><path d="M11.25 4.75L12.53 3.47" stroke="#747881" stroke-width="1.800" stroke-linecap="round"/></svg>
<svg class="ic" style="left:684px;top:88px" width="16" height="16" viewBox="0 0 16 16" ><g fill="none" stroke="#747881" stroke-width="1.600"><circle cx="8" cy="8" r="6.200"/><path d="M8 1.800v12.400M1.800 8h12.400"/><ellipse cx="8" cy="8" rx="3" ry="6.200"/></g></svg>
<svg class="ic" style="left:716px;top:88px" width="16" height="16" viewBox="0 0 16 16" ><circle cx="8" cy="2" r="1.900" fill="#e0e0e0"/><circle cx="8" cy="8" r="1.900" fill="#e0e0e0"/><circle cx="8" cy="14" r="1.900" fill="#e0e0e0"/></svg>
<div class="t " style="left:756px;top:86px;">Transform</div>
<div class="t " style="left:839px;top:86px;">View</div>
<svg class="a" style="left:0;top:0" width="1920" height="1017" viewBox="0 0 1920 1017"><defs><clipPath id="vp"><rect x="283" y="116" width="1354" height="848"/></clipPath></defs><g clip-path="url(#vp)" fill="none"><rect x="282" y="115" width="1356" height="850" fill="#626262"/><path d="M1549 115L1640 115L1640 470L1402.6 390.2Z" fill="#d28a6c"/><defs><linearGradient id="gg" x1="0" y1="117" x2="0" y2="520" gradientUnits="userSpaceOnUse"><stop offset="0" stop-color="#fff" stop-opacity=".38"/><stop offset="1" stop-color="#fff" stop-opacity="1"/></linearGradient><mask id="gm" maskUnits="userSpaceOnUse" x="280" y="110" width="1360" height="860"><rect x="280" y="110" width="1360" height="860" fill="url(#gg)"/></mask></defs><path mask="url(#gm)" d="M995.9 26.8L-7360.4 281.6M995.9 26.8L200851.7 6747.2M1005.7 27.2L-8538.1 325.2M986.2 27.1L313268.9 10784.5M1015.7 27.5L-10148.9 384.9M976.1 27.4L305620.3 10784.5M1026.0 27.8L-12485.5 471.4M965.9 27.7L297971.7 10784.5M1036.5 28.2L-16181.2 608.3M955.4 28.1L290323.1 10784.5M1047.3 28.6L-22907.7 857.4M944.7 28.4L282674.5 10784.5M1058.4 28.9L-38985.7 1452.8M933.7 28.7L275025.9 10784.5M1069.8 29.3L-128374.7 4763.2M922.4 29.1L267377.3 10784.5M1081.5 29.7L-284629.3 10784.5M910.8 29.4L259728.8 10784.5M1093.6 30.1L-276232.4 10784.5M899.0 29.8L252080.2 10784.5M1106.0 30.5L-267835.6 10784.5M886.8 30.2L244431.6 10784.5M1118.7 31.0L-259438.7 10784.5M874.3 30.5L236783.0 10784.5M1131.8 31.4L-251041.9 10784.5M861.5 30.9L229134.4 10784.5M1145.3 31.8L-242645.0 10784.5M848.4 31.3L221485.8 10784.5M1159.3 32.3L-234248.2 10784.5M834.9 31.7L213837.2 10784.5M1173.6 32.8L-225851.3 10784.5M821.1 32.2L206188.6 10784.5M1188.4 33.3L-217454.5 10784.5M806.8 32.6L198540.0 10784.5M1203.6 33.8L-209057.6 10784.5M792.2 33.0L190891.5 10784.5M1219.4 34.3L-200660.8 10784.5M777.1 33.5L183242.9 10784.5M1235.7 34.9L-192263.9 10784.5M761.6 34.0L175594.3 10784.5M1252.5 35.5L-183867.1 10784.5M745.7 34.5L167945.7 10784.5M1269.8 36.0L-175470.2 10784.5M729.2 35.0L160297.1 10784.5M1287.8 36.6L-167073.4 10784.5M712.3 35.5L152648.5 10784.5M1306.4 37.3L-158676.5 10784.5M694.9 36.0L144999.9 10784.5M1325.6 37.9L-150279.7 10784.5M676.9 36.6L137351.3 10784.5M1345.6 38.6L-141882.8 10784.5M658.3 37.1L129702.8 10784.5M1366.2 39.3L-133486.0 10784.5M639.2 37.7L122054.2 10784.5M1387.7 40.0L-125089.1 10784.5M619.4 38.3L114405.6 10784.5M1410.0 40.7L-116692.3 10784.5M599.0 38.9L106757.0 10784.5M1433.1 41.5L-108295.4 10784.5M577.8 39.6L99108.4 10784.5M1457.2 42.3L-99898.5 10784.5M556.0 40.2L91459.8 10784.5M1482.2 43.2L-91501.7 10784.5M533.4 40.9L83811.2 10784.5M1508.3 44.1L-83104.8 10784.5M509.9 41.6L76162.6 10784.5M1535.5 45.0L-74708.0 10784.5M485.7 42.4L68514.0 10784.5M1563.8 45.9L-66311.1 10784.5M460.5 43.2L60865.5 10784.5M1593.5 46.9L-57914.3 10784.5M434.4 43.9L53216.9 10784.5M1624.4 48.0L-49517.4 10784.5M407.3 44.8L45568.3 10784.5M1656.8 49.0L-41120.6 10784.5M379.1 45.6L37919.7 10784.5M1690.7 50.2L-32723.7 10784.5M349.8 46.5L30271.1 10784.5M1726.2 51.4L-24326.9 10784.5M319.3 47.5L22622.5 10784.5M1763.5 52.6L-15930.0 10784.5M287.6 48.4L14973.9 10784.5M1802.7 54.0L-7533.2 10784.5M254.4 49.4L7325.3 10784.5M1844.0 55.3L863.7 10784.5M219.9 50.5L-323.3 10784.5M1887.4 56.8L9260.5 10784.5M183.8 51.6L-7971.8 10784.5M1933.3 58.3L17657.4 10784.5M146.1 52.7L-15620.4 10784.5M1981.7 60.0L26054.2 10784.5M106.7 53.9L-23269.0 10784.5M2033.0 61.7L34451.1 10784.5M65.4 55.2L-30917.6 10784.5M2087.4 63.5L42847.9 10784.5M22.1 56.5L-38566.2 10784.5M2145.1 65.5L51244.8 10784.5M-23.4 57.9L-46214.8 10784.5M2206.5 67.5L59641.7 10784.5M-71.2 59.4L-53863.4 10784.5M2272.0 69.7L68038.5 10784.5M-121.5 60.9L-61512.0 10784.5M2341.9 72.1L76435.4 10784.5M-174.6 62.5L-69160.6 10784.5M2416.8 74.6L84832.2 10784.5M-230.5 64.2L-76809.1 10784.5M2497.1 77.3L93229.1 10784.5M-289.6 66.0L-84457.7 10784.5M2583.6 80.2L101625.9 10784.5M-352.2 67.9L-92106.3 10784.5M2676.9 83.3L110022.8 10784.5M-418.6 70.0L-99754.9 10784.5M2777.8 86.7L118419.6 10784.5M-489.1 72.1L-107403.5 10784.5M2887.4 90.4L126816.5 10784.5M-564.1 74.4L-115052.1 10784.5M3006.9 94.4L135213.3 10784.5M-644.1 76.8L-122700.7 10784.5M3137.6 98.8L143610.2 10784.5M-729.6 79.4L-130349.3 10784.5M3281.1 103.7L152007.0 10784.5M-821.1 82.2L-137997.8 10784.5M3439.5 109.0L160403.9 10784.5M-919.4 85.2L-145646.4 10784.5M3615.2 114.9L168800.7 10784.5M-1025.2 88.5L-153295.0 10784.5M3811.2 121.5L177197.6 10784.5M-1139.4 91.9L-160943.6 10784.5M4031.3 128.9L185594.4 10784.5M-1263.1 95.7L-168592.2 10784.5M4280.0 137.3L193991.3 10784.5M-1397.4 99.8L-176240.8 10784.5M4563.6 146.8L202388.1 10784.5M-1543.9 104.3L-183889.4 10784.5M4889.8 157.8L210785.0 10784.5M-1704.2 109.2L-191538.0 10784.5M5268.9 170.5L219181.8 10784.5M-1880.4 114.5L-199186.6 10784.5M5715.1 185.5L227578.7 10784.5M-2074.9 120.5L-206835.1 10784.5M6247.9 203.4L235975.6 10784.5M-2290.9 127.0L-214483.7 10784.5M6895.2 225.2L244372.4 10784.5M-2532.1 134.4L-222132.3 10784.5M7698.2 252.2L252769.3 10784.5M-2803.1 142.7L-229780.9 10784.5M8720.9 286.6L261166.1 10784.5M-3109.8 152.0L-237429.5 10784.5M10067.8 331.9L269563.0 10784.5M-3459.9 162.7L-245078.1 10784.5M11922.0 394.2L277959.8 10784.5M-3863.1 175.0L-252726.7 10784.5M14636.8 485.5L286356.7 10784.5M-4332.6 189.3L-260375.3 10784.5M18992.1 632.0L294753.5 10784.5M-4886.2 206.2L-268023.9 10784.5M27118.8 905.2L303150.4 10784.5M-5548.7 226.4L-275672.4 10784.5M47656.2 1595.8L311547.2 10784.5M-6355.7 251.0L-283321.0 10784.5M200851.7 6747.2L319944.1 10784.5M-7360.4 281.6L-290969.6 10784.5" stroke="#b4b4b4" stroke-width="1" opacity=".36"/><path d="M379 115L1540 964.3" stroke="#f4486f" stroke-width="2.1" stroke-linecap="butt"/><path d="M280 952.4L1640 127.6" stroke="#2f9ff7" stroke-width="2.1" stroke-linecap="butt"/><path d="M960 115L960 790.6" stroke="#9bd321" stroke-width="2.1" stroke-linecap="butt"/><path d="M1070 115L946 545" stroke="#f0a414" stroke-width="1.2" stroke-linecap="butt"/><path d="M282 587L948 548.5" stroke="#f0a414" stroke-width="1.2" stroke-linecap="butt"/><path d="M948 548.5L1492 965" stroke="#f0a414" stroke-width="1.2" stroke-linecap="butt"/><path d="M763.7 283.1L776.5 289.9" stroke="#000" stroke-width="1.8" stroke-linecap="round"/><path d="M776.5 289.9L790 296.9" stroke="#000" stroke-width="1.9" stroke-linecap="round"/><path d="M790 296.9L804.2 304.3" stroke="#000" stroke-width="1.9" stroke-linecap="round"/><path d="M804.2 304.3L819.1 312" stroke="#000" stroke-width="2.0" stroke-linecap="round"/><path d="M819.1 312L834.7 320.2" stroke="#000" stroke-width="2.0" stroke-linecap="round"/><path d="M834.7 320.2L851.3 328.8" stroke="#000" stroke-width="2.1" stroke-linecap="round"/><path d="M763.7 283.1L761.3 271.7" stroke="#000" stroke-width="1.8" stroke-linecap="round"/><path d="M761.3 271.7L758.8 260.1" stroke="#000" stroke-width="1.9" stroke-linecap="round"/><path d="M758.8 260.1L756.3 248.1" stroke="#000" stroke-width="1.9" stroke-linecap="round"/><path d="M756.3 248.1L753.7 235.8" stroke="#000" stroke-width="1.9" stroke-linecap="round"/><path d="M753.7 235.8L751.1 223.2" stroke="#000" stroke-width="1.9" stroke-linecap="round"/><path d="M751.1 223.2L748.4 210.3" stroke="#000" stroke-width="1.9" stroke-linecap="round"/><path d="M763.7 283.1L750.6 286.6" stroke="#000" stroke-width="1.8" stroke-linecap="round"/><path d="M750.6 286.6L737.1 290.1" stroke="#000" stroke-width="1.9" stroke-linecap="round"/><path d="M737.1 290.1L723.4 293.6" stroke="#000" stroke-width="1.9" stroke-linecap="round"/><path d="M723.4 293.6L709.3 297.3" stroke="#000" stroke-width="1.9" stroke-linecap="round"/><path d="M709.3 297.3L694.8 301.1" stroke="#000" stroke-width="1.9" stroke-linecap="round"/><path d="M694.8 301.1L680 304.9" stroke="#000" stroke-width="1.9" stroke-linecap="round"/><path d="M941.2 322.6L958.1 330.2" stroke="#000" stroke-width="2.3" stroke-linecap="round"/><path d="M958.1 330.2L975.9 338.1" stroke="#000" stroke-width="2.3" stroke-linecap="round"/><path d="M975.9 338.1L994.6 346.5" stroke="#000" stroke-width="2.4" stroke-linecap="round"/><path d="M994.6 346.5L1014.2 355.2" stroke="#000" stroke-width="2.4" stroke-linecap="round"/><path d="M1014.2 355.2L1034.8 364.5" stroke="#000" stroke-width="2.5" stroke-linecap="round"/><path d="M1034.8 364.5L1056.5 374.2" stroke="#000" stroke-width="2.6" stroke-linecap="round"/><path d="M941.2 322.6L940.9 307.9" stroke="#000" stroke-width="2.3" stroke-linecap="round"/><path d="M940.9 307.9L940.5 292.8" stroke="#000" stroke-width="2.3" stroke-linecap="round"/><path d="M940.5 292.8L940.2 277.2" stroke="#000" stroke-width="2.3" stroke-linecap="round"/><path d="M940.2 277.2L939.9 261" stroke="#000" stroke-width="2.4" stroke-linecap="round"/><path d="M939.9 261L939.5 244.2" stroke="#000" stroke-width="2.4" stroke-linecap="round"/><path d="M939.5 244.2L939.1 226.9" stroke="#000" stroke-width="2.5" stroke-linecap="round"/><path d="M941.2 322.6L919.1 330.4" stroke="#000" stroke-width="2.3" stroke-linecap="round"/><path d="M919.1 330.4L896 338.6" stroke="#000" stroke-width="2.3" stroke-linecap="round"/><path d="M896 338.6L871.7 347.2" stroke="#000" stroke-width="2.4" stroke-linecap="round"/><path d="M871.7 347.2L846.1 356.2" stroke="#000" stroke-width="2.4" stroke-linecap="round"/><path d="M846.1 356.2L819.2 365.8" stroke="#000" stroke-width="2.5" stroke-linecap="round"/><path d="M819.2 365.8L790.8 375.9" stroke="#000" stroke-width="2.6" stroke-linecap="round"/><path d="M677.9 384.7L692.1 396.7" stroke="#000" stroke-width="2.7" stroke-linecap="round"/><path d="M692.1 396.7L707.3 409.5" stroke="#000" stroke-width="2.8" stroke-linecap="round"/><path d="M707.3 409.5L723.5 423.1" stroke="#000" stroke-width="2.9" stroke-linecap="round"/><path d="M723.5 423.1L740.8 437.7" stroke="#000" stroke-width="3.0" stroke-linecap="round"/><path d="M740.8 437.7L759.3 453.3" stroke="#000" stroke-width="3.1" stroke-linecap="round"/><path d="M759.3 453.3L779.2 470.1" stroke="#000" stroke-width="3.2" stroke-linecap="round"/><path d="M677.9 384.7L671.7 366.3" stroke="#000" stroke-width="2.7" stroke-linecap="round"/><path d="M671.7 366.3L665.1 347.1" stroke="#000" stroke-width="2.8" stroke-linecap="round"/><path d="M665.1 347.1L658.3 327" stroke="#000" stroke-width="2.8" stroke-linecap="round"/><path d="M658.3 327L651.2 305.9" stroke="#000" stroke-width="2.9" stroke-linecap="round"/><path d="M651.2 305.9L643.7 283.9" stroke="#000" stroke-width="3.0" stroke-linecap="round"/><path d="M643.7 283.9L635.9 260.7" stroke="#000" stroke-width="3.0" stroke-linecap="round"/><path d="M677.9 384.7L638.2 397.7" stroke="#000" stroke-width="2.7" stroke-linecap="round"/><path d="M638.2 397.7L595.7 411.6" stroke="#000" stroke-width="2.8" stroke-linecap="round"/><path d="M595.7 411.6L550.1 426.6" stroke="#000" stroke-width="2.9" stroke-linecap="round"/><path d="M550.1 426.6L501.1 442.6" stroke="#000" stroke-width="3.0" stroke-linecap="round"/><path d="M501.1 442.6L448.2 460" stroke="#000" stroke-width="3.1" stroke-linecap="round"/><path d="M448.2 460L391 478.7" stroke="#000" stroke-width="3.3" stroke-linecap="round"/><path d="M1094.8 447.6L1113.7 457.3" stroke="#000" stroke-width="2.7" stroke-linecap="round"/><path d="M1113.7 457.3L1133.4 467.4" stroke="#000" stroke-width="2.8" stroke-linecap="round"/><path d="M1133.4 467.4L1154 477.9" stroke="#000" stroke-width="2.9" stroke-linecap="round"/><path d="M1154 477.9L1175.6 489" stroke="#000" stroke-width="2.9" stroke-linecap="round"/><path d="M1175.6 489L1198.2 500.6" stroke="#000" stroke-width="3.0" stroke-linecap="round"/><path d="M1198.2 500.6L1221.9 512.7" stroke="#000" stroke-width="3.1" stroke-linecap="round"/><path d="M1094.8 447.6L1099.4 421" stroke="#000" stroke-width="2.7" stroke-linecap="round"/><path d="M1099.4 421L1104.4 392.5" stroke="#000" stroke-width="2.8" stroke-linecap="round"/><path d="M1104.4 392.5L1109.8 361.9" stroke="#000" stroke-width="3.0" stroke-linecap="round"/><path d="M1109.8 361.9L1115.6 328.9" stroke="#000" stroke-width="3.1" stroke-linecap="round"/><path d="M1115.6 328.9L1121.8 293.2" stroke="#000" stroke-width="3.2" stroke-linecap="round"/><path d="M1121.8 293.2L1128.6 254.6" stroke="#000" stroke-width="3.3" stroke-linecap="round"/><path d="M1094.8 447.6L1079.1 456.9" stroke="#000" stroke-width="2.7" stroke-linecap="round"/><path d="M1079.1 456.9L1062.8 466.6" stroke="#000" stroke-width="2.8" stroke-linecap="round"/><path d="M1062.8 466.6L1045.7 476.6" stroke="#000" stroke-width="2.8" stroke-linecap="round"/><path d="M1045.7 476.6L1027.9 487.2" stroke="#000" stroke-width="2.9" stroke-linecap="round"/><path d="M1027.9 487.2L1009.3 498.2" stroke="#000" stroke-width="3.0" stroke-linecap="round"/><path d="M1009.3 498.2L989.9 509.7" stroke="#000" stroke-width="3.0" stroke-linecap="round"/><path d="M1311.2 474.6L1451.2 535.5" stroke="#000" stroke-width="3.3" stroke-linecap="round"/><path d="M1451.2 535.5L1632.5 614.4" stroke="#000" stroke-width="3.8" stroke-linecap="round"/><path d="M1632.5 614.4L1876.7 720.7" stroke="#000" stroke-width="4.4" stroke-linecap="round"/><path d="M1876.7 720.7L2223.1 871.4" stroke="#000" stroke-width="5.2" stroke-linecap="round"/><path d="M2223.1 871.4L2753 1102" stroke="#000" stroke-width="6.4" stroke-linecap="round"/><path d="M2753 1102L3664.7 1498.7" stroke="#000" stroke-width="8.0" stroke-linecap="round"/><path d="M1311.2 474.6L1319.2 457.5" stroke="#000" stroke-width="3.2" stroke-linecap="round"/><path d="M1319.2 457.5L1327.7 439.6" stroke="#000" stroke-width="3.2" stroke-linecap="round"/><path d="M1327.7 439.6L1336.6 420.8" stroke="#000" stroke-width="3.3" stroke-linecap="round"/><path d="M1336.6 420.8L1345.9 401.1" stroke="#000" stroke-width="3.4" stroke-linecap="round"/><path d="M1345.9 401.1L1355.7 380.4" stroke="#000" stroke-width="3.5" stroke-linecap="round"/><path d="M1355.7 380.4L1366 358.6" stroke="#000" stroke-width="3.6" stroke-linecap="round"/><path d="M1311.2 474.6L1294.6 489.2" stroke="#000" stroke-width="3.2" stroke-linecap="round"/><path d="M1294.6 489.2L1277 504.7" stroke="#000" stroke-width="3.3" stroke-linecap="round"/><path d="M1277 504.7L1258.2 521.2" stroke="#000" stroke-width="3.4" stroke-linecap="round"/><path d="M1258.2 521.2L1238.1 538.9" stroke="#000" stroke-width="3.5" stroke-linecap="round"/><path d="M1238.1 538.9L1216.6 557.8" stroke="#000" stroke-width="3.6" stroke-linecap="round"/><path d="M1216.6 557.8L1193.6 578.1" stroke="#000" stroke-width="3.7" stroke-linecap="round"/><path d="M790.5 478.4L801 487.2" stroke="#000" stroke-width="3.9" stroke-linecap="round"/><path d="M801 487.2L811.8 496.3" stroke="#000" stroke-width="3.9" stroke-linecap="round"/><path d="M811.8 496.3L823.1 505.8" stroke="#000" stroke-width="4.0" stroke-linecap="round"/><path d="M823.1 505.8L834.8 515.6" stroke="#000" stroke-width="4.1" stroke-linecap="round"/><path d="M834.8 515.6L846.9 525.8" stroke="#000" stroke-width="4.2" stroke-linecap="round"/><path d="M846.9 525.8L859.6 536.4" stroke="#000" stroke-width="4.3" stroke-linecap="round"/><path d="M790.5 478.4L788.2 468.4" stroke="#000" stroke-width="3.9" stroke-linecap="round"/><path d="M788.2 468.4L785.9 458.2" stroke="#000" stroke-width="3.9" stroke-linecap="round"/><path d="M785.9 458.2L783.5 447.6" stroke="#000" stroke-width="4.0" stroke-linecap="round"/><path d="M783.5 447.6L781 436.8" stroke="#000" stroke-width="4.0" stroke-linecap="round"/><path d="M781 436.8L778.4 425.7" stroke="#000" stroke-width="4.1" stroke-linecap="round"/><path d="M778.4 425.7L775.8 414.2" stroke="#000" stroke-width="4.1" stroke-linecap="round"/><path d="M790.5 478.4L753.9 494.9" stroke="#000" stroke-width="3.9" stroke-linecap="round"/><path d="M753.9 494.9L714.6 512.7" stroke="#000" stroke-width="4.0" stroke-linecap="round"/><path d="M714.6 512.7L672.4 531.7" stroke="#000" stroke-width="4.2" stroke-linecap="round"/><path d="M672.4 531.7L626.9 552.2" stroke="#000" stroke-width="4.3" stroke-linecap="round"/><path d="M626.9 552.2L577.8 574.4" stroke="#000" stroke-width="4.5" stroke-linecap="round"/><path d="M577.8 574.4L524.6 598.4" stroke="#000" stroke-width="4.7" stroke-linecap="round"/><path d="M754.7 230L770.6 251.8L705.4 300.3L687.9 278.5Z" fill="none" stroke="#f01850" stroke-width="2.1" stroke-linejoin="round" stroke-linecap="round"/><path d="M757 236L696 284" fill="none" stroke="#f01850" stroke-width="1.8" stroke-linejoin="round" stroke-linecap="round"/><path d="M742.7 238.7L758.9 260.5" stroke="#f01850" stroke-width="1.9" stroke-linecap="butt"/><path d="M734.7 244.6L751 266.4" stroke="#f01850" stroke-width="1.9" stroke-linecap="butt"/><path d="M713.3 260.1L730.2 281.9" stroke="#f01850" stroke-width="1.9" stroke-linecap="butt"/><path d="M702.6 267.8L719.7 289.6" stroke="#f01850" stroke-width="1.9" stroke-linecap="butt"/><path d="M694.6 273.6L711.9 295.4" stroke="#f01850" stroke-width="1.9" stroke-linecap="butt"/><ellipse cx="744" cy="269" rx="19.5" ry="5" transform="rotate(3 744 269)" fill="none" stroke="#ff0000" stroke-width="2.8"/><ellipse cx="752" cy="312" rx="18" ry="5.5" transform="rotate(-3 752 312)" fill="none" stroke="#ff0000" stroke-width="2.8"/><path d="M724.5 269.5L734 312" stroke="#ff0000" stroke-width="2.8" stroke-linecap="butt"/><path d="M732 269.5L741 312" stroke="#ff0000" stroke-width="2.8" stroke-linecap="butt"/><path d="M745 269.5L750 312" stroke="#ff0000" stroke-width="2.8" stroke-linecap="butt"/><path d="M756 269.5L761 312" stroke="#ff0000" stroke-width="2.8" stroke-linecap="butt"/><path d="M763.5 269.5L770 312" stroke="#ff0000" stroke-width="2.8" stroke-linecap="butt"/><ellipse cx="765" cy="305" rx="11.5" ry="14.5" transform="rotate(-10 765 305)" fill="none" stroke="#22b02e" stroke-width="2.8"/><ellipse cx="800" cy="294" rx="11.5" ry="14.5" transform="rotate(-10 800 294)" fill="none" stroke="#22b02e" stroke-width="2.8"/><path d="M762.9 291L797.9 280" stroke="#22b02e" stroke-width="2.8" stroke-linecap="butt"/><path d="M764.2 300L799.2 289" stroke="#22b02e" stroke-width="2.8" stroke-linecap="butt"/><path d="M765.8 310L800.8 299" stroke="#22b02e" stroke-width="2.8" stroke-linecap="butt"/><path d="M767.1 319L802.1 308" stroke="#22b02e" stroke-width="2.8" stroke-linecap="butt"/><path d="M765 290L765 320" stroke="#22b02e" stroke-width="1.6" stroke-linecap="butt"/><path d="M754 305L776 303" stroke="#22b02e" stroke-width="1.6" stroke-linecap="butt"/><path d="M790 279L805 286" stroke="#22b02e" stroke-width="1.6" stroke-linecap="butt"/><g transform="rotate(-4 931.5 305.5)" fill="none" stroke="#ff6a10" stroke-width="1.5"><ellipse cx="931.5" cy="305.5" rx="26.0" ry="51.0" fill="#ff6a10" stroke="none"/><ellipse cx="931.5" cy="305.5" rx="26.0" ry="51.0"/><ellipse cx="931.5" cy="305.5" rx="24.7" ry="51.0"/><ellipse cx="931.5" cy="305.5" rx="21.0" ry="51.0"/><ellipse cx="931.5" cy="305.5" rx="15.3" ry="51.0"/><ellipse cx="931.5" cy="305.5" rx="8.0" ry="51.0"/><path d="M931.5 254.5V356.5"/><ellipse cx="931.5" cy="305.5" rx="8.0" ry="51.0"/><ellipse cx="931.5" cy="305.5" rx="15.3" ry="51.0"/><ellipse cx="931.5" cy="305.5" rx="21.0" ry="51.0"/><ellipse cx="931.5" cy="305.5" rx="24.7" ry="51.0"/><ellipse cx="931.5" cy="262.2" rx="13.0" ry="3.6"/><ellipse cx="931.5" cy="268.8" rx="17.7" ry="4.9"/><ellipse cx="931.5" cy="275.5" rx="20.8" ry="5.8"/><ellipse cx="931.5" cy="282.2" rx="23.0" ry="6.4"/><ellipse cx="931.5" cy="288.8" rx="24.5" ry="6.9"/><ellipse cx="931.5" cy="295.5" rx="25.5" ry="7.1"/><ellipse cx="931.5" cy="302.2" rx="25.9" ry="7.3"/><ellipse cx="931.5" cy="308.8" rx="25.9" ry="7.3"/><ellipse cx="931.5" cy="315.5" rx="25.5" ry="7.1"/><ellipse cx="931.5" cy="322.2" rx="24.5" ry="6.9"/><ellipse cx="931.5" cy="328.8" rx="23.0" ry="6.4"/><ellipse cx="931.5" cy="335.5" rx="20.8" ry="5.8"/><ellipse cx="931.5" cy="342.2" rx="17.7" ry="4.9"/><ellipse cx="931.5" cy="348.8" rx="13.0" ry="3.6"/></g><g stroke="#626262" stroke-width="1" opacity=".55"><path d="M915 290l2 3M918 318l2 2"/><path d="M920 299l2 3M922 325l2 2"/><path d="M925 308l2 3M926 332l2 2"/><path d="M930 290l2 3M930 339l2 2"/><path d="M935 299l2 3M934 318l2 2"/><path d="M940 308l2 3M938 325l2 2"/><path d="M945 290l2 3M942 332l2 2"/><path d="M950 299l2 3M946 339l2 2"/></g><path d="M926.0 280.8l1.400 0l0 1.600l-1.400 0zM937.5 270.2l1.400 0l0 1.600l-1.400 0zM933.2 269.3l1.400 0l0 1.600l-1.400 0zM942.7 304.0l1.400 0l0 1.600l-1.400 0zM943.8 291.0l1.400 0l0 1.600l-1.400 0zM937.6 293.7l1.400 0l0 1.600l-1.400 0zM927.7 303.1l1.400 0l0 1.600l-1.400 0zM924.5 293.4l1.400 0l0 1.600l-1.400 0zM940.0 301.2l1.400 0l0 1.600l-1.400 0zM931.7 330.1l1.400 0l0 1.600l-1.400 0zM934.5 287.3l1.400 0l0 1.600l-1.400 0zM935.4 288.6l1.400 0l0 1.600l-1.400 0zM930.6 292.3l1.400 0l0 1.600l-1.400 0zM946.1 300.3l1.400 0l0 1.600l-1.400 0zM935.5 314.4l1.400 0l0 1.600l-1.400 0zM946.1 296.7l1.400 0l0 1.600l-1.400 0zM930.9 330.4l1.400 0l0 1.600l-1.400 0zM923.6 293.6l1.400 0l0 1.600l-1.400 0zM937.5 329.8l1.400 0l0 1.600l-1.400 0zM929.3 270.7l1.400 0l0 1.600l-1.400 0zM939.6 289.2l1.400 0l0 1.600l-1.400 0zM930.6 310.0l1.400 0l0 1.600l-1.400 0zM936.0 306.5l1.400 0l0 1.600l-1.400 0zM930.8 323.6l1.400 0l0 1.600l-1.400 0zM944.7 300.6l1.400 0l0 1.600l-1.400 0zM930.2 315.2l1.400 0l0 1.600l-1.400 0zM937.8 279.8l1.400 0l0 1.600l-1.400 0zM930.4 320.3l1.400 0l0 1.600l-1.400 0zM933.1 292.7l1.400 0l0 1.600l-1.400 0zM935.9 299.2l1.400 0l0 1.600l-1.400 0zM934.0 270.6l1.400 0l0 1.600l-1.400 0zM945.5 303.2l1.400 0l0 1.600l-1.400 0zM927.4 318.1l1.400 0l0 1.600l-1.400 0zM936.8 300.4l1.400 0l0 1.600l-1.400 0zM939.3 328.4l1.400 0l0 1.600l-1.400 0zM937.7 326.3l1.400 0l0 1.600l-1.400 0zM945.4 286.7l1.400 0l0 1.600l-1.400 0zM929.7 315.8l1.400 0l0 1.600l-1.400 0zM922.7 295.6l1.400 0l0 1.600l-1.400 0zM942.8 317.4l1.400 0l0 1.600l-1.400 0zM937.5 271.6l1.400 0l0 1.600l-1.400 0zM946.3 307.1l1.400 0l0 1.600l-1.400 0zM940.4 310.1l1.400 0l0 1.600l-1.400 0zM924.4 280.3l1.400 0l0 1.600l-1.400 0zM927.3 326.0l1.400 0l0 1.600l-1.400 0zM927.0 295.0l1.400 0l0 1.600l-1.400 0zM931.8 312.3l1.400 0l0 1.600l-1.400 0zM938.4 305.8l1.400 0l0 1.600l-1.400 0zM929.2 270.4l1.400 0l0 1.600l-1.400 0zM935.5 306.0l1.400 0l0 1.600l-1.400 0zM943.5 298.0l1.400 0l0 1.600l-1.400 0zM928.7 308.7l1.400 0l0 1.600l-1.400 0zM924.2 283.8l1.400 0l0 1.600l-1.400 0zM925.9 305.7l1.400 0l0 1.600l-1.400 0zM945.7 310.5l1.400 0l0 1.600l-1.400 0zM942.9 304.6l1.400 0l0 1.600l-1.400 0zM936.5 290.2l1.400 0l0 1.600l-1.400 0zM932.5 269.0l1.400 0l0 1.600l-1.400 0zM926.1 279.2l1.400 0l0 1.600l-1.400 0zM940.7 313.1l1.400 0l0 1.600l-1.400 0zM941.1 323.7l1.400 0l0 1.600l-1.400 0zM931.6 320.7l1.400 0l0 1.600l-1.400 0zM946.0 299.9l1.400 0l0 1.600l-1.400 0zM942.7 296.8l1.400 0l0 1.600l-1.400 0zM922.9 302.0l1.400 0l0 1.600l-1.400 0zM927.0 302.3l1.400 0l0 1.600l-1.400 0zM929.9 307.0l1.400 0l0 1.600l-1.400 0zM924.7 322.2l1.400 0l0 1.600l-1.400 0zM944.0 293.7l1.400 0l0 1.600l-1.400 0zM926.4 300.1l1.400 0l0 1.600l-1.400 0z" fill="#5a3a28" opacity=".8"/><g transform="rotate(22 859.0 334.0)" fill="none" stroke="#ea1858" stroke-width="2.2"><ellipse cx="859.0" cy="334.0" rx="24.0" ry="48.5"/><ellipse cx="859.0" cy="334.0" rx="22.8" ry="48.5"/><ellipse cx="859.0" cy="334.0" rx="19.4" ry="48.5"/><ellipse cx="859.0" cy="334.0" rx="14.1" ry="48.5"/><ellipse cx="859.0" cy="334.0" rx="7.4" ry="48.5"/><path d="M859.0 285.5V382.5"/><ellipse cx="859.0" cy="334.0" rx="7.4" ry="48.5"/><ellipse cx="859.0" cy="334.0" rx="14.1" ry="48.5"/><ellipse cx="859.0" cy="334.0" rx="19.4" ry="48.5"/><ellipse cx="859.0" cy="334.0" rx="22.8" ry="48.5"/><ellipse cx="859.0" cy="295.1" rx="13.8" ry="3.9"/><ellipse cx="859.0" cy="303.8" rx="18.5" ry="5.2"/><ellipse cx="859.0" cy="312.4" rx="21.4" ry="6.0"/><ellipse cx="859.0" cy="321.0" rx="23.1" ry="6.5"/><ellipse cx="859.0" cy="329.7" rx="23.9" ry="6.7"/><ellipse cx="859.0" cy="338.3" rx="23.9" ry="6.7"/><ellipse cx="859.0" cy="347.0" rx="23.1" ry="6.5"/><ellipse cx="859.0" cy="355.6" rx="21.4" ry="6.0"/><ellipse cx="859.0" cy="364.2" rx="18.5" ry="5.2"/><ellipse cx="859.0" cy="372.9" rx="13.8" ry="3.9"/></g><g transform="rotate(0 984.5 324.0)" fill="none" stroke="#82b6f2" stroke-width="1.3"><ellipse cx="984.5" cy="324.0" rx="45.0" ry="47.5" fill="#82b6f2" stroke="none"/><ellipse cx="984.5" cy="324.0" rx="45.0" ry="47.5"/><ellipse cx="984.5" cy="324.0" rx="42.8" ry="47.5"/><ellipse cx="984.5" cy="324.0" rx="36.4" ry="47.5"/><ellipse cx="984.5" cy="324.0" rx="26.5" ry="47.5"/><ellipse cx="984.5" cy="324.0" rx="13.9" ry="47.5"/><path d="M984.5 276.5V371.5"/><ellipse cx="984.5" cy="324.0" rx="13.9" ry="47.5"/><ellipse cx="984.5" cy="324.0" rx="26.5" ry="47.5"/><ellipse cx="984.5" cy="324.0" rx="36.4" ry="47.5"/><ellipse cx="984.5" cy="324.0" rx="42.8" ry="47.5"/><ellipse cx="984.5" cy="284.6" rx="24.0" ry="6.7"/><ellipse cx="984.5" cy="291.8" rx="32.5" ry="9.1"/><ellipse cx="984.5" cy="298.9" rx="37.9" ry="10.6"/><ellipse cx="984.5" cy="306.1" rx="41.5" ry="11.6"/><ellipse cx="984.5" cy="313.3" rx="43.8" ry="12.3"/><ellipse cx="984.5" cy="320.4" rx="44.9" ry="12.6"/><ellipse cx="984.5" cy="327.6" rx="44.9" ry="12.6"/><ellipse cx="984.5" cy="334.7" rx="43.8" ry="12.3"/><ellipse cx="984.5" cy="341.9" rx="41.5" ry="11.6"/><ellipse cx="984.5" cy="349.1" rx="37.9" ry="10.6"/><ellipse cx="984.5" cy="356.2" rx="32.5" ry="9.1"/><ellipse cx="984.5" cy="363.4" rx="24.0" ry="6.7"/></g><path d="M973.1 283.7l1.0 0l-0.5 0.8zM976.2 285.1l1.0 0l-0.5 -0.8zM979.2 283.6l1.2 0l-0.6 1.0zM982.3 285.2l1.2 0l-0.6 -1.0zM985.4 283.6l1.2 0l-0.6 1.0zM988.5 285.2l1.2 0l-0.6 -1.0zM991.6 283.6l1.1 0l-0.6 0.9zM994.7 285.2l1.1 0l-0.6 -0.9zM963.7 288.7l1.1 0l-0.6 0.9zM966.8 290.3l1.1 0l-0.6 -0.9zM969.8 288.6l1.5 0l-0.7 1.3zM972.9 290.4l1.5 0l-0.7 -1.3zM975.8 288.5l1.7 0l-0.9 1.5zM978.9 290.5l1.7 0l-0.9 -1.5zM982.0 288.4l1.8 0l-0.9 1.6zM985.1 290.6l1.8 0l-0.9 -1.6zM988.2 288.5l1.8 0l-0.9 1.5zM991.3 290.6l1.8 0l-0.9 -1.5zM994.5 288.5l1.6 0l-0.8 1.4zM997.6 290.5l1.6 0l-0.8 -1.4zM1000.8 288.6l1.3 0l-0.7 1.1zM1003.9 290.4l1.3 0l-0.7 -1.1zM960.5 293.7l1.4 0l-0.7 1.2zM963.6 295.5l1.4 0l-0.7 -1.2zM966.5 293.5l1.8 0l-0.9 1.6zM969.6 295.7l1.8 0l-0.9 -1.6zM972.5 293.4l2.1 0l-1.1 1.8zM975.6 295.8l2.1 0l-1.1 -1.8zM978.6 293.3l2.3 0l-1.2 2.0zM981.7 295.9l2.3 0l-1.2 -2.0zM984.8 293.3l2.3 0l-1.2 2.0zM987.9 295.9l2.3 0l-1.2 -2.0zM991.1 293.4l2.2 0l-1.1 1.9zM994.2 295.9l2.2 0l-1.1 -1.9zM997.4 293.4l2.0 0l-1.0 1.7zM1000.5 295.8l2.0 0l-1.0 -1.7zM1003.8 293.6l1.7 0l-0.8 1.4zM1006.9 295.6l1.7 0l-0.8 -1.4zM1010.2 293.8l1.1 0l-0.6 1.0zM1013.3 295.4l1.1 0l-0.6 -1.0zM951.4 299.0l0.9 0l-0.5 0.8zM954.5 300.4l0.9 0l-0.5 -0.8zM957.3 298.7l1.6 0l-0.8 1.3zM960.4 300.7l1.6 0l-0.8 -1.3zM963.3 298.5l2.1 0l-1.0 1.8zM966.4 300.9l2.1 0l-1.0 -1.8zM969.3 298.4l2.4 0l-1.2 2.1zM972.4 301.0l2.4 0l-1.2 -2.1zM975.4 298.3l2.7 0l-1.3 2.3zM978.5 301.1l2.7 0l-1.3 -2.3zM981.5 298.2l2.8 0l-1.4 2.4zM984.6 301.2l2.8 0l-1.4 -2.4zM987.7 298.2l2.7 0l-1.4 2.3zM990.8 301.2l2.7 0l-1.4 -2.3zM994.0 298.3l2.6 0l-1.3 2.2zM997.1 301.1l2.6 0l-1.3 -2.2zM1000.4 298.4l2.3 0l-1.1 1.9zM1003.5 301.0l2.3 0l-1.1 -1.9zM1006.8 298.6l1.9 0l-0.9 1.6zM1009.9 300.8l1.9 0l-0.9 -1.6zM1013.3 298.8l1.3 0l-0.6 1.1zM1016.4 300.5l1.3 0l-0.6 -1.1zM948.3 304.0l0.9 0l-0.5 0.8zM951.4 305.4l0.9 0l-0.5 -0.8zM954.2 303.8l1.6 0l-0.8 1.4zM957.3 305.8l1.6 0l-0.8 -1.4zM960.1 303.5l2.2 0l-1.1 1.9zM963.2 306.0l2.2 0l-1.1 -1.9zM966.1 303.4l2.6 0l-1.3 2.2zM969.2 306.2l2.6 0l-1.3 -2.2zM972.1 303.3l2.9 0l-1.5 2.5zM975.2 306.3l2.9 0l-1.5 -2.5zM978.3 303.2l3.1 0l-1.5 2.6zM981.4 306.4l3.1 0l-1.5 -2.6zM984.5 303.2l3.1 0l-1.5 2.6zM987.6 306.4l3.1 0l-1.5 -2.6zM990.7 303.2l3.0 0l-1.5 2.6zM993.8 306.4l3.0 0l-1.5 -2.6zM997.0 303.3l2.8 0l-1.4 2.4zM1000.1 306.3l2.8 0l-1.4 -2.4zM1003.4 303.4l2.4 0l-1.2 2.1zM1006.5 306.1l2.4 0l-1.2 -2.1zM1009.8 303.6l2.0 0l-1.0 1.7zM1012.9 305.9l2.0 0l-1.0 -1.7zM1016.3 303.9l1.3 0l-0.7 1.1zM1019.4 305.6l1.3 0l-0.7 -1.1zM951.1 308.9l1.6 0l-0.8 1.4zM954.2 310.8l1.6 0l-0.8 -1.4zM957.0 308.6l2.2 0l-1.1 1.9zM960.1 311.1l2.2 0l-1.1 -1.9zM962.9 308.4l2.7 0l-1.4 2.3zM966.0 311.3l2.7 0l-1.4 -2.3zM969.0 308.3l3.0 0l-1.5 2.6zM972.1 311.5l3.0 0l-1.5 -2.6zM975.1 308.2l3.3 0l-1.6 2.8zM978.2 311.6l3.3 0l-1.6 -2.8zM981.2 308.2l3.3 0l-1.7 2.8zM984.3 311.6l3.3 0l-1.7 -2.8zM987.4 308.2l3.3 0l-1.7 2.8zM990.5 311.6l3.3 0l-1.7 -2.8zM993.7 308.2l3.2 0l-1.6 2.7zM996.8 311.5l3.2 0l-1.6 -2.7zM1000.1 308.3l2.9 0l-1.4 2.5zM1003.2 311.4l2.9 0l-1.4 -2.5zM1006.5 308.5l2.5 0l-1.2 2.1zM1009.6 311.2l2.5 0l-1.2 -2.1zM1012.9 308.7l1.9 0l-1.0 1.6zM1016.0 311.0l1.9 0l-1.0 -1.6zM1019.5 309.0l1.2 0l-0.6 1.0zM1022.6 310.7l1.2 0l-0.6 -1.0zM948.1 314.0l1.4 0l-0.7 1.2zM951.2 315.8l1.4 0l-0.7 -1.2zM953.9 313.7l2.1 0l-1.1 1.8zM957.0 316.1l2.1 0l-1.1 -1.8zM959.9 313.5l2.7 0l-1.3 2.3zM963.0 316.4l2.7 0l-1.3 -2.3zM965.9 313.4l3.1 0l-1.5 2.6zM969.0 316.6l3.1 0l-1.5 -2.6zM971.9 313.3l3.3 0l-1.7 2.8zM975.0 316.7l3.3 0l-1.7 -2.8zM978.1 313.2l3.5 0l-1.7 3.0zM981.2 316.7l3.5 0l-1.7 -3.0zM984.3 313.2l3.5 0l-1.7 3.0zM987.4 316.8l3.5 0l-1.7 -3.0zM990.5 313.2l3.4 0l-1.7 2.9zM993.6 316.7l3.4 0l-1.7 -2.9zM996.8 313.3l3.2 0l-1.6 2.7zM999.9 316.6l3.2 0l-1.6 -2.7zM1003.2 313.4l2.9 0l-1.4 2.5zM1006.3 316.5l2.9 0l-1.4 -2.5zM1009.6 313.6l2.4 0l-1.2 2.1zM1012.7 316.3l2.4 0l-1.2 -2.1zM1016.1 313.9l1.8 0l-0.9 1.5zM1019.2 316.0l1.8 0l-0.9 -1.5zM1022.7 314.2l1.0 0l-0.5 0.9zM1025.8 315.6l1.0 0l-0.5 -0.9zM945.1 319.2l1.1 0l-0.6 0.9zM948.2 320.8l1.1 0l-0.6 -0.9zM951.0 318.9l1.9 0l-0.9 1.6zM954.1 321.1l1.9 0l-0.9 -1.6zM956.8 318.7l2.5 0l-1.3 2.1zM959.9 321.4l2.5 0l-1.3 -2.1zM962.8 318.5l3.0 0l-1.5 2.5zM965.9 321.6l3.0 0l-1.5 -2.5zM968.8 318.3l3.3 0l-1.7 2.8zM971.9 321.8l3.3 0l-1.7 -2.8zM974.9 318.3l3.5 0l-1.8 3.0zM978.0 321.8l3.5 0l-1.8 -3.0zM981.1 318.2l3.6 0l-1.8 3.0zM984.2 321.9l3.6 0l-1.8 -3.0zM987.3 318.2l3.6 0l-1.8 3.0zM990.4 321.9l3.6 0l-1.8 -3.0zM993.6 318.3l3.4 0l-1.7 2.9zM996.7 321.8l3.4 0l-1.7 -2.9zM999.9 318.4l3.2 0l-1.6 2.7zM1003.0 321.7l3.2 0l-1.6 -2.7zM1006.3 318.6l2.8 0l-1.4 2.4zM1009.4 321.5l2.8 0l-1.4 -2.4zM1012.8 318.8l2.2 0l-1.1 1.9zM1015.9 321.3l2.2 0l-1.1 -1.9zM1019.3 319.1l1.5 0l-0.8 1.3zM1022.4 321.0l1.5 0l-0.8 -1.3zM948.0 324.1l1.6 0l-0.8 1.3zM951.1 326.1l1.6 0l-0.8 -1.3zM953.9 323.9l2.3 0l-1.1 1.9zM957.0 326.4l2.3 0l-1.1 -1.9zM959.8 323.6l2.8 0l-1.4 2.4zM962.9 326.6l2.8 0l-1.4 -2.4zM965.8 323.5l3.2 0l-1.6 2.7zM968.9 326.8l3.2 0l-1.6 -2.7zM971.9 323.4l3.4 0l-1.7 2.9zM975.0 326.9l3.4 0l-1.7 -2.9zM978.0 323.3l3.6 0l-1.8 3.0zM981.1 327.0l3.6 0l-1.8 -3.0zM984.2 323.3l3.6 0l-1.8 3.1zM987.3 327.0l3.6 0l-1.8 -3.1zM990.4 323.3l3.5 0l-1.8 3.0zM993.5 326.9l3.5 0l-1.8 -3.0zM996.7 323.4l3.3 0l-1.7 2.8zM999.8 326.9l3.3 0l-1.7 -2.8zM1003.1 323.5l3.0 0l-1.5 2.6zM1006.2 326.7l3.0 0l-1.5 -2.6zM1009.5 323.7l2.6 0l-1.3 2.2zM1012.6 326.5l2.6 0l-1.3 -2.2zM1016.0 324.0l1.9 0l-1.0 1.6zM1019.1 326.2l1.9 0l-1.0 -1.6zM1022.6 324.3l1.2 0l-0.6 1.0zM1025.7 325.9l1.2 0l-0.6 -1.0zM945.2 329.4l1.1 0l-0.5 0.9zM948.3 330.9l1.1 0l-0.5 -0.9zM951.0 329.1l1.9 0l-0.9 1.6zM954.1 331.3l1.9 0l-0.9 -1.6zM956.9 328.8l2.5 0l-1.2 2.1zM960.0 331.6l2.5 0l-1.2 -2.1zM962.8 328.7l3.0 0l-1.5 2.5zM965.9 331.8l3.0 0l-1.5 -2.5zM968.9 328.5l3.3 0l-1.6 2.8zM972.0 331.9l3.3 0l-1.6 -2.8zM975.0 328.4l3.5 0l-1.7 3.0zM978.1 332.0l3.5 0l-1.7 -3.0zM981.1 328.4l3.6 0l-1.8 3.0zM984.2 332.0l3.6 0l-1.8 -3.0zM987.3 328.4l3.5 0l-1.8 3.0zM990.4 332.0l3.5 0l-1.8 -3.0zM993.6 328.5l3.4 0l-1.7 2.9zM996.7 332.0l3.4 0l-1.7 -2.9zM999.9 328.6l3.2 0l-1.6 2.7zM1003.0 331.9l3.2 0l-1.6 -2.7zM1006.3 328.7l2.8 0l-1.4 2.3zM1009.4 331.7l2.8 0l-1.4 -2.3zM1012.8 329.0l2.2 0l-1.1 1.9zM1015.9 331.4l2.2 0l-1.1 -1.9zM1019.3 329.2l1.5 0l-0.8 1.3zM1022.4 331.1l1.5 0l-0.8 -1.3zM948.1 334.4l1.4 0l-0.7 1.2zM951.2 336.1l1.4 0l-0.7 -1.2zM954.0 334.1l2.1 0l-1.0 1.8zM957.1 336.5l2.1 0l-1.0 -1.8zM959.9 333.9l2.6 0l-1.3 2.2zM963.0 336.7l2.6 0l-1.3 -2.2zM965.9 333.7l3.0 0l-1.5 2.6zM969.0 336.9l3.0 0l-1.5 -2.6zM972.0 333.6l3.3 0l-1.6 2.8zM975.1 337.0l3.3 0l-1.6 -2.8zM978.1 333.6l3.4 0l-1.7 2.9zM981.2 337.1l3.4 0l-1.7 -2.9zM984.3 333.5l3.5 0l-1.7 2.9zM987.4 337.1l3.5 0l-1.7 -2.9zM990.5 333.6l3.4 0l-1.7 2.9zM993.6 337.0l3.4 0l-1.7 -2.9zM996.8 333.7l3.2 0l-1.6 2.7zM999.9 337.0l3.2 0l-1.6 -2.7zM1003.2 333.8l2.8 0l-1.4 2.4zM1006.3 336.8l2.8 0l-1.4 -2.4zM1009.6 334.0l2.4 0l-1.2 2.0zM1012.7 336.6l2.4 0l-1.2 -2.0zM1016.1 334.2l1.7 0l-0.9 1.5zM1019.2 336.3l1.7 0l-0.9 -1.5zM1022.7 334.5l1.0 0l-0.5 0.8zM1025.8 336.0l1.0 0l-0.5 -0.8zM951.1 339.4l1.5 0l-0.8 1.3zM954.2 341.3l1.5 0l-0.8 -1.3zM957.0 339.1l2.2 0l-1.1 1.8zM960.1 341.6l2.2 0l-1.1 -1.8zM963.0 339.0l2.6 0l-1.3 2.2zM966.1 341.8l2.6 0l-1.3 -2.2zM969.0 338.8l3.0 0l-1.5 2.5zM972.1 341.9l3.0 0l-1.5 -2.5zM975.1 338.7l3.2 0l-1.6 2.7zM978.2 342.0l3.2 0l-1.6 -2.7zM981.3 338.7l3.3 0l-1.6 2.8zM984.4 342.1l3.3 0l-1.6 -2.8zM987.5 338.7l3.2 0l-1.6 2.8zM990.6 342.1l3.2 0l-1.6 -2.8zM993.7 338.8l3.1 0l-1.6 2.6zM996.8 342.0l3.1 0l-1.6 -2.6zM1000.1 338.9l2.8 0l-1.4 2.4zM1003.2 341.9l2.8 0l-1.4 -2.4zM1006.5 339.0l2.4 0l-1.2 2.1zM1009.6 341.7l2.4 0l-1.2 -2.1zM1013.0 339.3l1.9 0l-0.9 1.6zM1016.1 341.4l1.9 0l-0.9 -1.6zM1019.5 339.5l1.1 0l-0.6 1.0zM1022.6 341.1l1.1 0l-0.6 -1.0zM954.2 344.5l1.5 0l-0.8 1.3zM957.3 346.4l1.5 0l-0.8 -1.3zM960.1 344.2l2.1 0l-1.1 1.8zM963.2 346.6l2.1 0l-1.1 -1.8zM966.1 344.1l2.5 0l-1.3 2.2zM969.2 346.8l2.5 0l-1.3 -2.2zM972.2 344.0l2.8 0l-1.4 2.4zM975.3 347.0l2.8 0l-1.4 -2.4zM978.3 343.9l3.0 0l-1.5 2.5zM981.4 347.0l3.0 0l-1.5 -2.5zM984.5 343.9l3.0 0l-1.5 2.6zM987.6 347.0l3.0 0l-1.5 -2.6zM990.7 343.9l2.9 0l-1.5 2.5zM993.8 347.0l2.9 0l-1.5 -2.5zM997.0 344.0l2.7 0l-1.4 2.3zM1000.1 346.9l2.7 0l-1.4 -2.3zM1003.4 344.2l2.4 0l-1.2 2.0zM1006.5 346.8l2.4 0l-1.2 -2.0zM1009.9 344.3l1.9 0l-0.9 1.6zM1013.0 346.5l1.9 0l-0.9 -1.6zM1016.4 344.6l1.2 0l-0.6 1.0zM1019.5 346.2l1.2 0l-0.6 -1.0zM957.4 349.6l1.5 0l-0.7 1.2zM960.5 351.4l1.5 0l-0.7 -1.2zM963.3 349.4l2.0 0l-1.0 1.7zM966.4 351.7l2.0 0l-1.0 -1.7zM969.3 349.2l2.3 0l-1.2 2.0zM972.4 351.8l2.3 0l-1.2 -2.0zM975.4 349.2l2.6 0l-1.3 2.2zM978.5 351.9l2.6 0l-1.3 -2.2zM981.6 349.1l2.7 0l-1.3 2.3zM984.7 352.0l2.7 0l-1.3 -2.3zM987.8 349.1l2.6 0l-1.3 2.2zM990.9 352.0l2.6 0l-1.3 -2.2zM994.1 349.2l2.5 0l-1.2 2.1zM997.2 351.9l2.5 0l-1.2 -2.1zM1000.4 349.3l2.2 0l-1.1 1.8zM1003.5 351.8l2.2 0l-1.1 -1.8zM1006.8 349.5l1.7 0l-0.9 1.5zM1009.9 351.6l1.7 0l-0.9 -1.5zM1013.3 349.7l1.2 0l-0.6 1.0zM1016.4 351.3l1.2 0l-0.6 -1.0zM960.6 354.8l1.3 0l-0.6 1.1zM963.7 356.4l1.3 0l-0.6 -1.1zM966.5 354.6l1.7 0l-0.9 1.4zM969.6 356.6l1.7 0l-0.9 -1.4zM972.6 354.5l2.0 0l-1.0 1.7zM975.7 356.8l2.0 0l-1.0 -1.7zM978.7 354.4l2.2 0l-1.1 1.8zM981.8 356.8l2.2 0l-1.1 -1.8zM984.9 354.4l2.2 0l-1.1 1.9zM988.0 356.9l2.2 0l-1.1 -1.9zM991.1 354.4l2.1 0l-1.1 1.8zM994.2 356.8l2.1 0l-1.1 -1.8zM997.5 354.5l1.9 0l-0.9 1.6zM1000.6 356.7l1.9 0l-0.9 -1.6zM1003.8 354.7l1.5 0l-0.8 1.3zM1006.9 356.5l1.5 0l-0.8 -1.3zM1010.3 354.9l1.0 0l-0.5 0.8zM1013.4 356.3l1.0 0l-0.5 -0.8zM963.8 360.0l0.9 0l-0.5 0.8zM966.9 361.4l0.9 0l-0.5 -0.8zM969.8 359.8l1.3 0l-0.7 1.1zM972.9 361.5l1.3 0l-0.7 -1.1zM975.9 359.7l1.6 0l-0.8 1.3zM979.0 361.6l1.6 0l-0.8 -1.3zM982.1 359.7l1.7 0l-0.8 1.4zM985.2 361.7l1.7 0l-0.8 -1.4zM988.3 359.7l1.6 0l-0.8 1.4zM991.4 361.7l1.6 0l-0.8 -1.4zM994.6 359.8l1.5 0l-0.7 1.2zM997.7 361.6l1.5 0l-0.7 -1.2zM1000.9 359.9l1.1 0l-0.6 1.0zM1004.0 361.5l1.1 0l-0.6 -1.0zM979.3 365.0l1.0 0l-0.5 0.8zM982.4 366.5l1.0 0l-0.5 -0.8zM985.5 365.0l1.0 0l-0.5 0.9zM988.6 366.5l1.0 0l-0.5 -0.9z" fill="#5e6064" opacity=".85"/><g transform="rotate(-8 912.0 350.5)" fill="none" stroke="#b23ff2" stroke-width="2.4"><ellipse cx="912.0" cy="350.5" rx="47.0" ry="51.0"/><ellipse cx="912.0" cy="350.5" rx="43.4" ry="51.0"/><ellipse cx="912.0" cy="350.5" rx="33.2" ry="51.0"/><ellipse cx="912.0" cy="350.5" rx="18.0" ry="51.0"/><path d="M912.0 299.5V401.5"/><ellipse cx="912.0" cy="350.5" rx="18.0" ry="51.0"/><ellipse cx="912.0" cy="350.5" rx="33.2" ry="51.0"/><ellipse cx="912.0" cy="350.5" rx="43.4" ry="51.0"/><ellipse cx="912.0" cy="314.8" rx="32.9" ry="9.2"/><ellipse cx="912.0" cy="329.1" rx="42.5" ry="11.9"/><ellipse cx="912.0" cy="343.4" rx="46.5" ry="13.0"/><ellipse cx="912.0" cy="357.6" rx="46.5" ry="13.0"/><ellipse cx="912.0" cy="371.9" rx="42.5" ry="11.9"/><ellipse cx="912.0" cy="386.2" rx="32.9" ry="9.2"/></g><path d="M1154.4 324L1202 319.5L1135.5 347.4L1079.1 344.1L1110.5 334.8L1106.7 357.4L1140.6 345.9L1185.7 352.9" fill="none" stroke="#ff0000" stroke-width="4.2" stroke-linejoin="miter" stroke-linecap="butt"/><path d="M1149.3 354.6L1193.2 354.1L1145.6 374.2L1101.7 390.5L1100.4 366.7L1074.1 373L1098 364.5" fill="none" stroke="#f4f2e4" stroke-width="4.2" stroke-linejoin="miter" stroke-linecap="butt"/><path d="M1145.6 374.2L1179.4 384.2" stroke="#f4f2e4" stroke-width="4" stroke-linecap="butt"/><path d="M1100.4 366.7L1148 376" stroke="#f4f2e4" stroke-width="3" stroke-linecap="butt"/><rect x="1137.6" y="380.7" width="6" height="6" fill="#068206"/><rect x="1181.4" y="384.5" width="6" height="6" fill="#068206"/><rect x="1097" y="391.8" width="6" height="6" fill="#068206"/><rect x="1066.6" y="396.8" width="6" height="6" fill="#068206"/><rect x="1148.9" y="398" width="6" height="6" fill="#068206"/><rect x="1092.4" y="418.9" width="6" height="6" fill="#068206"/><rect x="1168.9" y="411.3" width="6" height="6" fill="#068206"/><path d="M1134.3 411.1L1176.2 418.1" stroke="#f2825e" stroke-width="3.6" stroke-linecap="round"/><path d="M1176.2 418.1L1089.2 449.4" stroke="#f2825e" stroke-width="3.6" stroke-linecap="round"/><path d="M1066.6 424.4L1146.8 425.1" stroke="#f2825e" stroke-width="3.6" stroke-linecap="round"/><path d="M1095.4 421.9L1090.4 448.2" stroke="#f2825e" stroke-width="3.6" stroke-linecap="round"/><path d="M1146.8 425.1L1160 437" stroke="#f2825e" stroke-width="3.6" stroke-linecap="round"/><path d="M1066 448L1140 452" fill="none" stroke="#ffe600" stroke-width="8" stroke-linejoin="round" stroke-linecap="butt"/><path d="M1062 446L1080 440L1081 455Z" fill="#ffe600"/><path d="M1168 443L1092 470" fill="none" stroke="#ffe600" stroke-width="6" stroke-linejoin="round" stroke-linecap="butt"/><path d="M1168 441.5L1130 441" fill="none" stroke="#ffe600" stroke-width="6" stroke-linejoin="round" stroke-linecap="butt"/><path d="M1085 476L1108 455L1114 474Z" fill="#ffe600"/><path d="M1082 452L1094 452L1093 474L1085 476Z" fill="#ffe600"/><path d="M1118 446L1138 450L1122 458Z" fill="#ffe600"/><rect x="1130.8" y="407.6" width="7" height="7" fill="#0606ff"/><rect x="1172.7" y="414.6" width="7" height="7" fill="#0606ff"/><rect x="1063.1" y="420.9" width="7" height="7" fill="#0606ff"/><rect x="1143.3" y="421.6" width="7" height="7" fill="#0606ff"/><rect x="1085.7" y="445.9" width="7" height="7" fill="#0606ff"/><rect x="1162.1" y="437.2" width="7" height="7" fill="#0606ff"/><path d="M1060.3 470.2L1086.6 472.7" stroke="#e61ec0" stroke-width="1.4" stroke-linecap="butt"/><path d="M1086.6 472.7L1135.6 472.7" stroke="#e61ec0" stroke-width="1.4" stroke-linecap="butt"/><path d="M1135.6 472.7L1161.9 471.5" stroke="#e61ec0" stroke-width="1.4" stroke-linecap="butt"/><path d="M1086.6 472.7L1081.1 500.3" stroke="#e61ec0" stroke-width="1.4" stroke-linecap="butt"/><path d="M1081.1 500.3L1153.1 489" stroke="#e61ec0" stroke-width="1.4" stroke-linecap="butt"/><path d="M1153.1 489L1135.6 472.7" stroke="#e61ec0" stroke-width="1.4" stroke-linecap="butt"/><path d="M1135.6 472.7L1123 458.9" stroke="#e61ec0" stroke-width="1.4" stroke-linecap="butt"/><circle cx="1060.3" cy="470.2" r="7.8" fill="#40c8a0" stroke="none" stroke-width="0" opacity="0.92"/><circle cx="1086.6" cy="472.7" r="7.8" fill="#40c8a0" stroke="none" stroke-width="0" opacity="0.92"/><circle cx="1123" cy="458.9" r="7.8" fill="#40c8a0" stroke="none" stroke-width="0" opacity="0.92"/><circle cx="1135.6" cy="472.7" r="7.8" fill="#40c8a0" stroke="none" stroke-width="0" opacity="0.92"/><circle cx="1161.9" cy="471.5" r="7.8" fill="#40c8a0" stroke="none" stroke-width="0" opacity="0.92"/><circle cx="1153.1" cy="489" r="7.8" fill="#40c8a0" stroke="none" stroke-width="0" opacity="0.92"/><circle cx="1081.1" cy="500.3" r="7.8" fill="#40c8a0" stroke="none" stroke-width="0" opacity="0.92"/><path d="M1085 476L1108 457L1113 473Z" fill="#ffe600"/><path d="M576.8 300.9L675 327.5" fill="none" stroke="#c394f2" stroke-width="3" stroke-linejoin="round" stroke-linecap="round"/><path d="M576.8 300.9L675 327.5" fill="none" stroke="#8a6ab0" stroke-width="0.7" stroke-linejoin="round" stroke-linecap="round"/><path d="M576.8 300.9L587.4 326.6" fill="none" stroke="#c394f2" stroke-width="3" stroke-linejoin="round" stroke-linecap="round"/><path d="M576.8 300.9L587.4 326.6" fill="none" stroke="#8a6ab0" stroke-width="0.7" stroke-linejoin="round" stroke-linecap="round"/><path d="M587.4 326.6L672.4 350.5" fill="none" stroke="#c394f2" stroke-width="3" stroke-linejoin="round" stroke-linecap="round"/><path d="M587.4 326.6L672.4 350.5" fill="none" stroke="#8a6ab0" stroke-width="0.7" stroke-linejoin="round" stroke-linecap="round"/><path d="M587.4 326.6L610.4 387.7" fill="none" stroke="#c394f2" stroke-width="3" stroke-linejoin="round" stroke-linecap="round"/><path d="M587.4 326.6L610.4 387.7" fill="none" stroke="#8a6ab0" stroke-width="0.7" stroke-linejoin="round" stroke-linecap="round"/><path d="M675 327.5L692.7 355.8" fill="none" stroke="#c394f2" stroke-width="3" stroke-linejoin="round" stroke-linecap="round"/><path d="M675 327.5L692.7 355.8" fill="none" stroke="#8a6ab0" stroke-width="0.7" stroke-linejoin="round" stroke-linecap="round"/><path d="M675 327.5L683.9 355.8" fill="none" stroke="#c394f2" stroke-width="3" stroke-linejoin="round" stroke-linecap="round"/><path d="M675 327.5L683.9 355.8" fill="none" stroke="#8a6ab0" stroke-width="0.7" stroke-linejoin="round" stroke-linecap="round"/><path d="M672.4 350.5L683.9 355.8L692.7 355.8" fill="none" stroke="#c394f2" stroke-width="3" stroke-linejoin="round" stroke-linecap="round"/><path d="M672.4 350.5L683.9 355.8L692.7 355.8" fill="none" stroke="#8a6ab0" stroke-width="0.7" stroke-linejoin="round" stroke-linecap="round"/><path d="M683.9 355.8L701.6 417.7" fill="none" stroke="#c394f2" stroke-width="3" stroke-linejoin="round" stroke-linecap="round"/><path d="M683.9 355.8L701.6 417.7" fill="none" stroke="#8a6ab0" stroke-width="0.7" stroke-linejoin="round" stroke-linecap="round"/><path d="M692.7 355.8L714 433.7L720.2 449.6" fill="none" stroke="#c394f2" stroke-width="3" stroke-linejoin="round" stroke-linecap="round"/><path d="M692.7 355.8L714 433.7L720.2 449.6" fill="none" stroke="#8a6ab0" stroke-width="0.7" stroke-linejoin="round" stroke-linecap="round"/><path d="M610.4 387.7L701.6 417.7" fill="none" stroke="#c394f2" stroke-width="3" stroke-linejoin="round" stroke-linecap="round"/><path d="M610.4 387.7L701.6 417.7" fill="none" stroke="#8a6ab0" stroke-width="0.7" stroke-linejoin="round" stroke-linecap="round"/><path d="M610.4 387.7L625.5 416.9" fill="none" stroke="#c394f2" stroke-width="3" stroke-linejoin="round" stroke-linecap="round"/><path d="M610.4 387.7L625.5 416.9" fill="none" stroke="#8a6ab0" stroke-width="0.7" stroke-linejoin="round" stroke-linecap="round"/><path d="M625.5 416.9L720.2 449.6" fill="none" stroke="#c394f2" stroke-width="3" stroke-linejoin="round" stroke-linecap="round"/><path d="M625.5 416.9L720.2 449.6" fill="none" stroke="#8a6ab0" stroke-width="0.7" stroke-linejoin="round" stroke-linecap="round"/><path d="M701.6 417.7L720.2 449.6" fill="none" stroke="#c394f2" stroke-width="3" stroke-linejoin="round" stroke-linecap="round"/><path d="M701.6 417.7L720.2 449.6" fill="none" stroke="#8a6ab0" stroke-width="0.7" stroke-linejoin="round" stroke-linecap="round"/><path d="M457.3 400L515.8 384L540.9 423.5L480.7 441.9Z" fill="none" stroke="#00f2f2" stroke-width="3.2" stroke-linejoin="miter" stroke-linecap="round"/><path d="M465.6 416.8L527.5 401.7" stroke="#00f2f2" stroke-width="5" stroke-linecap="butt"/><path d="M470 424L531 408" stroke="#00f2f2" stroke-width="3" stroke-linecap="butt"/><path d="M485.1 428.5L608.8 390.1L637.2 418.5L506 462" fill="none" stroke="#f51cb4" stroke-width="3.2" stroke-linejoin="miter" stroke-linecap="round"/><path d="M485.1 428.5L548.6 533L665.7 483.7L653.1 455.3L637.2 418.5" fill="none" stroke="#f51cb4" stroke-width="3.2" stroke-linejoin="miter" stroke-linecap="round"/><path d="M608.8 390.1L637.2 455.3" fill="none" stroke="#f51cb4" stroke-width="3.2" stroke-linejoin="miter" stroke-linecap="round"/><path d="M528.5 497.9L637.2 455.3L653.1 455.3" fill="none" stroke="#f51cb4" stroke-width="3.2" stroke-linejoin="miter" stroke-linecap="round"/><path d="M480 451.1L502.6 426L534.4 438.5L511.8 467Z" fill="none" stroke="#8a33cc" stroke-width="3" stroke-linejoin="round" stroke-linecap="round"/><path d="M502.6 426L495.1 437.7L480 451.1" fill="none" stroke="#8a33cc" stroke-width="2.6" stroke-linejoin="round" stroke-linecap="round"/><path d="M495.1 437.7L520.2 450.3L534.4 438.5" fill="none" stroke="#8a33cc" stroke-width="3" stroke-linejoin="round" stroke-linecap="round"/><path d="M520.2 450.3L511.8 467" fill="none" stroke="#8a33cc" stroke-width="3" stroke-linejoin="round" stroke-linecap="round"/><path d="M480 451.1L506 458L520.2 450.3" fill="none" stroke="#8a33cc" stroke-width="2.4" stroke-linejoin="round" stroke-linecap="round"/><path d="M397.9 418.4L450.6 421.7L479 463.5L445.6 495.3L392 496.5L355.3 448.5Z" fill="none" stroke="#e2baba" stroke-width="3" stroke-linejoin="round" stroke-linecap="round"/><path d="M355.3 448.5L412.1 448.5L450.6 421.7" fill="none" stroke="#e2baba" stroke-width="3" stroke-linejoin="round" stroke-linecap="round"/><path d="M412.1 448.5L427.2 464.4L479 463.5" fill="none" stroke="#e2baba" stroke-width="3" stroke-linejoin="round" stroke-linecap="round"/><path d="M427.2 464.4L445.6 495.3" fill="none" stroke="#e2baba" stroke-width="3" stroke-linejoin="round" stroke-linecap="round"/><path d="M397.9 418.4L412.1 448.5" fill="none" stroke="#e2baba" stroke-width="3" stroke-linejoin="round" stroke-linecap="round"/><path d="M397.9 418.4L415 445L427.2 464.4" fill="none" stroke="#e2baba" stroke-width="2.6" stroke-linejoin="round" stroke-linecap="round"/><path d="M380.3 488.6L408.8 471.9L450.6 503.7L447.2 513.7L425.5 523.7Z" fill="none" stroke="#6f9230" stroke-width="3.6" stroke-linejoin="round" stroke-linecap="round"/><path d="M386 481L428 515" fill="none" stroke="#6f9230" stroke-width="3.6" stroke-linejoin="round" stroke-linecap="round"/><path d="M380.3 488.6L392 478L408.8 471.9" fill="none" stroke="#6f9230" stroke-width="2.6" stroke-linejoin="round" stroke-linecap="round"/><path d="M425.5 523.7L436 507L450.6 503.7" fill="none" stroke="#6f9230" stroke-width="3" stroke-linejoin="round" stroke-linecap="round"/><path d="M436 507L447.2 513.7" fill="none" stroke="#6f9230" stroke-width="3" stroke-linejoin="round" stroke-linecap="round"/><path d="M396 474L388 492" fill="none" stroke="#6f9230" stroke-width="3" stroke-linejoin="round" stroke-linecap="round"/><path d="M408 486L418 496" stroke="#d01818" stroke-width="2" stroke-linecap="butt"/><path d="M443.3 521.7L495.2 509.2L513.6 536.8L516.1 566.9L463.4 580.3L441.7 550.2Z" fill="none" stroke="#e8a850" stroke-width="3.8" stroke-linejoin="round" stroke-linecap="round"/><path d="M443.3 521.7L461.7 550.2L513.6 536.8" fill="none" stroke="#e8a850" stroke-width="3.6" stroke-linejoin="round" stroke-linecap="round"/><path d="M461.7 550.2L463.4 580.3" fill="none" stroke="#e8a850" stroke-width="3.6" stroke-linejoin="round" stroke-linecap="round"/><path d="M495.2 509.2L498 538L516.1 566.9" fill="none" stroke="#e8a850" stroke-width="3" stroke-linejoin="round" stroke-linecap="round"/><path d="M441.7 550.2L498 538" fill="none" stroke="#e8a850" stroke-width="2.8" stroke-linejoin="round" stroke-linecap="round"/><path d="M469 530L474 529L477 539L472.5 540.5Z" fill="#fff000"/><path d="M1370.5 523.1L1501 558.2" stroke="#0808f0" stroke-width="3.4" stroke-linecap="butt"/><path d="M1281.5 553L1486 566.3" stroke="#ff10f0" stroke-width="4.6" stroke-linecap="butt"/><path d="M1523.5 572.6L1640 681" stroke="#ff10f0" stroke-width="5" stroke-linecap="butt"/><path d="M1307.8 604L1496 572.6" stroke="#f8f000" stroke-width="5" stroke-linecap="butt"/><path d="M1455.8 634L1508.5 577.6" stroke="#ff0000" stroke-width="5" stroke-linecap="butt"/><path d="M1513.5 570L1531 600" stroke="#10e010" stroke-width="5" stroke-linecap="butt"/><path d="M1533.5 604L1640 772" stroke="#00f0f0" stroke-width="6.4" stroke-linecap="butt"/><rect x="1528.5" y="597.5" width="10" height="12" fill="#00f0f0"/><path d="M960 115L960 460" stroke="#9bd321" stroke-width="2.1" stroke-linecap="butt"/><path d="M1070 115L946 545" stroke="#f0a414" stroke-width="1.2" stroke-linecap="butt"/><path d="M1000 515.7L1200 394.4" stroke="#2f9ff7" stroke-width="2.1" stroke-linecap="butt"/><path d="M680 304.9L691.7 312.7" stroke="#000" stroke-width="2.0" stroke-linecap="round"/><path d="M691.7 312.7L704.1 320.9" stroke="#000" stroke-width="2.0" stroke-linecap="round"/><path d="M704.1 320.9L717.1 329.6" stroke="#000" stroke-width="2.1" stroke-linecap="round"/><path d="M717.1 329.6L730.8 338.7" stroke="#000" stroke-width="2.1" stroke-linecap="round"/><path d="M730.8 338.7L745.3 348.4" stroke="#000" stroke-width="2.2" stroke-linecap="round"/><path d="M745.3 348.4L760.7 358.6" stroke="#000" stroke-width="2.3" stroke-linecap="round"/><path d="M680 304.9L676.3 292.9" stroke="#000" stroke-width="2.0" stroke-linecap="round"/><path d="M676.3 292.9L672.5 280.6" stroke="#000" stroke-width="2.0" stroke-linecap="round"/><path d="M672.5 280.6L668.6 267.9" stroke="#000" stroke-width="2.0" stroke-linecap="round"/><path d="M668.6 267.9L664.6 254.9" stroke="#000" stroke-width="2.1" stroke-linecap="round"/><path d="M664.6 254.9L660.5 241.6" stroke="#000" stroke-width="2.1" stroke-linecap="round"/><path d="M660.5 241.6L656.3 227.8" stroke="#000" stroke-width="2.1" stroke-linecap="round"/><path d="M748.4 210.3L761.9 215.7" stroke="#000" stroke-width="2.0" stroke-linecap="round"/><path d="M761.9 215.7L776.1 221.3" stroke="#000" stroke-width="2.0" stroke-linecap="round"/><path d="M776.1 221.3L791 227.3" stroke="#000" stroke-width="2.1" stroke-linecap="round"/><path d="M791 227.3L806.9 233.6" stroke="#000" stroke-width="2.1" stroke-linecap="round"/><path d="M806.9 233.6L823.6 240.3" stroke="#000" stroke-width="2.2" stroke-linecap="round"/><path d="M823.6 240.3L841.3 247.3" stroke="#000" stroke-width="2.3" stroke-linecap="round"/><path d="M748.4 210.3L734 213" stroke="#000" stroke-width="2.0" stroke-linecap="round"/><path d="M734 213L719.3 215.8" stroke="#000" stroke-width="2.0" stroke-linecap="round"/><path d="M719.3 215.8L704.2 218.7" stroke="#000" stroke-width="2.0" stroke-linecap="round"/><path d="M704.2 218.7L688.6 221.7" stroke="#000" stroke-width="2.1" stroke-linecap="round"/><path d="M688.6 221.7L672.7 224.7" stroke="#000" stroke-width="2.1" stroke-linecap="round"/><path d="M672.7 224.7L656.3 227.8" stroke="#000" stroke-width="2.1" stroke-linecap="round"/><path d="M656.3 227.8L668.4 234.2" stroke="#000" stroke-width="2.2" stroke-linecap="round"/><path d="M668.4 234.2L681.2 240.9" stroke="#000" stroke-width="2.2" stroke-linecap="round"/><path d="M681.2 240.9L694.7 247.9" stroke="#000" stroke-width="2.3" stroke-linecap="round"/><path d="M694.7 247.9L709.1 255.5" stroke="#000" stroke-width="2.3" stroke-linecap="round"/><path d="M709.1 255.5L724.4 263.4" stroke="#000" stroke-width="2.4" stroke-linecap="round"/><path d="M724.4 263.4L740.6 271.9" stroke="#000" stroke-width="2.5" stroke-linecap="round"/><path d="M851.3 328.8L849.7 316.2" stroke="#000" stroke-width="2.1" stroke-linecap="round"/><path d="M849.7 316.2L848.1 303.2" stroke="#000" stroke-width="2.2" stroke-linecap="round"/><path d="M848.1 303.2L846.5 289.9" stroke="#000" stroke-width="2.2" stroke-linecap="round"/><path d="M846.5 289.9L844.8 276.1" stroke="#000" stroke-width="2.2" stroke-linecap="round"/><path d="M844.8 276.1L843.1 261.9" stroke="#000" stroke-width="2.3" stroke-linecap="round"/><path d="M843.1 261.9L841.3 247.3" stroke="#000" stroke-width="2.3" stroke-linecap="round"/><path d="M851.3 328.8L837.2 333.4" stroke="#000" stroke-width="2.1" stroke-linecap="round"/><path d="M837.2 333.4L822.8 338.2" stroke="#000" stroke-width="2.2" stroke-linecap="round"/><path d="M822.8 338.2L808 343.1" stroke="#000" stroke-width="2.2" stroke-linecap="round"/><path d="M808 343.1L792.7 348.1" stroke="#000" stroke-width="2.2" stroke-linecap="round"/><path d="M792.7 348.1L776.9 353.3" stroke="#000" stroke-width="2.3" stroke-linecap="round"/><path d="M776.9 353.3L760.7 358.6" stroke="#000" stroke-width="2.3" stroke-linecap="round"/><path d="M760.7 358.6L757.6 345.3" stroke="#000" stroke-width="2.3" stroke-linecap="round"/><path d="M757.6 345.3L754.4 331.5" stroke="#000" stroke-width="2.4" stroke-linecap="round"/><path d="M754.4 331.5L751.1 317.4" stroke="#000" stroke-width="2.4" stroke-linecap="round"/><path d="M751.1 317.4L747.7 302.7" stroke="#000" stroke-width="2.4" stroke-linecap="round"/><path d="M747.7 302.7L744.2 287.6" stroke="#000" stroke-width="2.5" stroke-linecap="round"/><path d="M744.2 287.6L740.6 271.9" stroke="#000" stroke-width="2.5" stroke-linecap="round"/><path d="M841.3 247.3L825.8 251.1" stroke="#000" stroke-width="2.3" stroke-linecap="round"/><path d="M825.8 251.1L809.8 255" stroke="#000" stroke-width="2.4" stroke-linecap="round"/><path d="M809.8 255L793.3 259" stroke="#000" stroke-width="2.4" stroke-linecap="round"/><path d="M793.3 259L776.3 263.2" stroke="#000" stroke-width="2.4" stroke-linecap="round"/><path d="M776.3 263.2L758.8 267.5" stroke="#000" stroke-width="2.5" stroke-linecap="round"/><path d="M758.8 267.5L740.6 271.9" stroke="#000" stroke-width="2.5" stroke-linecap="round"/><path d="M790.8 375.9L806.5 386.2" stroke="#000" stroke-width="2.7" stroke-linecap="round"/><path d="M806.5 386.2L823 397.2" stroke="#000" stroke-width="2.7" stroke-linecap="round"/><path d="M823 397.2L840.6 408.7" stroke="#000" stroke-width="2.8" stroke-linecap="round"/><path d="M840.6 408.7L859.2 421" stroke="#000" stroke-width="2.9" stroke-linecap="round"/><path d="M859.2 421L879 434.1" stroke="#000" stroke-width="3.0" stroke-linecap="round"/><path d="M879 434.1L900 448" stroke="#000" stroke-width="3.1" stroke-linecap="round"/><path d="M790.8 375.9L787.5 359.8" stroke="#000" stroke-width="2.6" stroke-linecap="round"/><path d="M787.5 359.8L784.2 343.1" stroke="#000" stroke-width="2.7" stroke-linecap="round"/><path d="M784.2 343.1L780.7 325.7" stroke="#000" stroke-width="2.7" stroke-linecap="round"/><path d="M780.7 325.7L777 307.6" stroke="#000" stroke-width="2.8" stroke-linecap="round"/><path d="M777 307.6L773.2 288.7" stroke="#000" stroke-width="2.9" stroke-linecap="round"/><path d="M773.2 288.7L769.3 269.1" stroke="#000" stroke-width="2.9" stroke-linecap="round"/><path d="M939.1 226.9L957.9 232.8" stroke="#000" stroke-width="2.5" stroke-linecap="round"/><path d="M957.9 232.8L977.7 239" stroke="#000" stroke-width="2.6" stroke-linecap="round"/><path d="M977.7 239L998.6 245.6" stroke="#000" stroke-width="2.7" stroke-linecap="round"/><path d="M998.6 245.6L1020.6 252.6" stroke="#000" stroke-width="2.7" stroke-linecap="round"/><path d="M1020.6 252.6L1044 259.9" stroke="#000" stroke-width="2.8" stroke-linecap="round"/><path d="M1044 259.9L1068.7 267.8" stroke="#000" stroke-width="2.9" stroke-linecap="round"/><path d="M939.1 226.9L914.7 233" stroke="#000" stroke-width="2.5" stroke-linecap="round"/><path d="M914.7 233L888.8 239.4" stroke="#000" stroke-width="2.6" stroke-linecap="round"/><path d="M888.8 239.4L861.5 246.2" stroke="#000" stroke-width="2.7" stroke-linecap="round"/><path d="M861.5 246.2L832.5 253.4" stroke="#000" stroke-width="2.7" stroke-linecap="round"/><path d="M832.5 253.4L801.9 261" stroke="#000" stroke-width="2.8" stroke-linecap="round"/><path d="M801.9 261L769.3 269.1" stroke="#000" stroke-width="2.9" stroke-linecap="round"/><path d="M769.3 269.1L786.4 277.5" stroke="#000" stroke-width="3.0" stroke-linecap="round"/><path d="M786.4 277.5L804.5 286.4" stroke="#000" stroke-width="3.1" stroke-linecap="round"/><path d="M804.5 286.4L823.9 295.9" stroke="#000" stroke-width="3.2" stroke-linecap="round"/><path d="M823.9 295.9L844.7 306.1" stroke="#000" stroke-width="3.3" stroke-linecap="round"/><path d="M844.7 306.1L866.9 317" stroke="#000" stroke-width="3.4" stroke-linecap="round"/><path d="M866.9 317L890.7 328.7" stroke="#000" stroke-width="3.5" stroke-linecap="round"/><path d="M1056.5 374.2L1058.4 358.2" stroke="#000" stroke-width="2.6" stroke-linecap="round"/><path d="M1058.4 358.2L1060.3 341.5" stroke="#000" stroke-width="2.7" stroke-linecap="round"/><path d="M1060.3 341.5L1062.3 324.1" stroke="#000" stroke-width="2.7" stroke-linecap="round"/><path d="M1062.3 324.1L1064.3 306.1" stroke="#000" stroke-width="2.8" stroke-linecap="round"/><path d="M1064.3 306.1L1066.5 287.3" stroke="#000" stroke-width="2.8" stroke-linecap="round"/><path d="M1066.5 287.3L1068.7 267.8" stroke="#000" stroke-width="2.9" stroke-linecap="round"/><path d="M1056.5 374.2L1034.1 384.8" stroke="#000" stroke-width="2.6" stroke-linecap="round"/><path d="M1034.1 384.8L1010.4 395.9" stroke="#000" stroke-width="2.7" stroke-linecap="round"/><path d="M1010.4 395.9L985.3 407.8" stroke="#000" stroke-width="2.8" stroke-linecap="round"/><path d="M985.3 407.8L958.6 420.3" stroke="#000" stroke-width="2.9" stroke-linecap="round"/><path d="M958.6 420.3L930.3 433.7" stroke="#000" stroke-width="3.0" stroke-linecap="round"/><path d="M930.3 433.7L900 448" stroke="#000" stroke-width="3.1" stroke-linecap="round"/><path d="M900 448L898.6 430.3" stroke="#000" stroke-width="3.2" stroke-linecap="round"/><path d="M898.6 430.3L897.2 411.9" stroke="#000" stroke-width="3.2" stroke-linecap="round"/><path d="M897.2 411.9L895.7 392.6" stroke="#000" stroke-width="3.3" stroke-linecap="round"/><path d="M895.7 392.6L894.1 372.3" stroke="#000" stroke-width="3.4" stroke-linecap="round"/><path d="M894.1 372.3L892.4 351" stroke="#000" stroke-width="3.5" stroke-linecap="round"/><path d="M892.4 351L890.7 328.7" stroke="#000" stroke-width="3.6" stroke-linecap="round"/><path d="M1068.7 267.8L1043.8 276.3" stroke="#000" stroke-width="3.0" stroke-linecap="round"/><path d="M1043.8 276.3L1017.2 285.4" stroke="#000" stroke-width="3.1" stroke-linecap="round"/><path d="M1017.2 285.4L988.8 295.1" stroke="#000" stroke-width="3.2" stroke-linecap="round"/><path d="M988.8 295.1L958.4 305.5" stroke="#000" stroke-width="3.3" stroke-linecap="round"/><path d="M958.4 305.5L925.8 316.7" stroke="#000" stroke-width="3.4" stroke-linecap="round"/><path d="M925.8 316.7L890.7 328.7" stroke="#000" stroke-width="3.5" stroke-linecap="round"/><path d="M391 478.7L397.6 497.5" stroke="#000" stroke-width="3.1" stroke-linecap="round"/><path d="M397.6 497.5L404.8 517.8" stroke="#000" stroke-width="3.2" stroke-linecap="round"/><path d="M404.8 517.8L412.6 539.8" stroke="#000" stroke-width="3.3" stroke-linecap="round"/><path d="M412.6 539.8L421 563.7" stroke="#000" stroke-width="3.5" stroke-linecap="round"/><path d="M421 563.7L430.3 590" stroke="#000" stroke-width="3.6" stroke-linecap="round"/><path d="M430.3 590L440.4 618.7" stroke="#000" stroke-width="3.8" stroke-linecap="round"/><path d="M391 478.7L375.3 458.3" stroke="#000" stroke-width="2.7" stroke-linecap="round"/><path d="M375.3 458.3L358.7 436.7" stroke="#000" stroke-width="2.8" stroke-linecap="round"/><path d="M358.7 436.7L341.1 413.9" stroke="#000" stroke-width="2.9" stroke-linecap="round"/><path d="M341.1 413.9L322.4 389.7" stroke="#000" stroke-width="2.9" stroke-linecap="round"/><path d="M322.4 389.7L302.6 364" stroke="#000" stroke-width="3.0" stroke-linecap="round"/><path d="M302.6 364L281.5 336.6" stroke="#000" stroke-width="3.1" stroke-linecap="round"/><path d="M635.9 260.7L650.8 270.1" stroke="#000" stroke-width="3.1" stroke-linecap="round"/><path d="M650.8 270.1L666.8 280.2" stroke="#000" stroke-width="3.2" stroke-linecap="round"/><path d="M666.8 280.2L684.1 291" stroke="#000" stroke-width="3.4" stroke-linecap="round"/><path d="M684.1 291L702.8 302.8" stroke="#000" stroke-width="3.5" stroke-linecap="round"/><path d="M702.8 302.8L723.1 315.5" stroke="#000" stroke-width="3.6" stroke-linecap="round"/><path d="M723.1 315.5L745.2 329.4" stroke="#000" stroke-width="3.8" stroke-linecap="round"/><path d="M635.9 260.7L588.4 270.9" stroke="#000" stroke-width="3.1" stroke-linecap="round"/><path d="M588.4 270.9L537 281.9" stroke="#000" stroke-width="3.3" stroke-linecap="round"/><path d="M537 281.9L481.2 293.8" stroke="#000" stroke-width="3.4" stroke-linecap="round"/><path d="M481.2 293.8L420.6 306.8" stroke="#000" stroke-width="3.5" stroke-linecap="round"/><path d="M420.6 306.8L354.3 321" stroke="#000" stroke-width="3.7" stroke-linecap="round"/><path d="M354.3 321L281.5 336.6" stroke="#000" stroke-width="3.9" stroke-linecap="round"/><path d="M281.5 336.6L284.3 352.4" stroke="#000" stroke-width="5.9" stroke-linecap="round"/><path d="M284.3 352.4L287.3 369.8" stroke="#000" stroke-width="6.2" stroke-linecap="round"/><path d="M287.3 369.8L290.7 389.1" stroke="#000" stroke-width="6.5" stroke-linecap="round"/><path d="M290.7 389.1L294.5 410.4" stroke="#000" stroke-width="6.8" stroke-linecap="round"/><path d="M294.5 410.4L298.6 434.2" stroke="#000" stroke-width="7.2" stroke-linecap="round"/><path d="M298.6 434.2L303.4 460.9" stroke="#000" stroke-width="7.7" stroke-linecap="round"/><path d="M779.2 470.1L774.3 449.8" stroke="#000" stroke-width="3.3" stroke-linecap="round"/><path d="M774.3 449.8L769.1 428.4" stroke="#000" stroke-width="3.4" stroke-linecap="round"/><path d="M769.1 428.4L763.7 405.8" stroke="#000" stroke-width="3.5" stroke-linecap="round"/><path d="M763.7 405.8L757.9 381.8" stroke="#000" stroke-width="3.6" stroke-linecap="round"/><path d="M757.9 381.8L751.7 356.4" stroke="#000" stroke-width="3.7" stroke-linecap="round"/><path d="M751.7 356.4L745.2 329.4" stroke="#000" stroke-width="3.8" stroke-linecap="round"/><path d="M779.2 470.1L734.6 489.7" stroke="#000" stroke-width="3.3" stroke-linecap="round"/><path d="M734.6 489.7L686 511" stroke="#000" stroke-width="3.5" stroke-linecap="round"/><path d="M686 511L633 534.2" stroke="#000" stroke-width="3.6" stroke-linecap="round"/><path d="M633 534.2L574.9 559.7" stroke="#000" stroke-width="3.8" stroke-linecap="round"/><path d="M574.9 559.7L511 587.7" stroke="#000" stroke-width="4.0" stroke-linecap="round"/><path d="M511 587.7L440.4 618.7" stroke="#000" stroke-width="4.2" stroke-linecap="round"/><path d="M440.4 618.7L421.7 597.2" stroke="#000" stroke-width="5.0" stroke-linecap="round"/><path d="M421.7 597.2L401.6 574" stroke="#000" stroke-width="5.2" stroke-linecap="round"/><path d="M401.6 574L379.9 549" stroke="#000" stroke-width="5.4" stroke-linecap="round"/><path d="M379.9 549L356.4 522" stroke="#000" stroke-width="5.6" stroke-linecap="round"/><path d="M356.4 522L331 492.8" stroke="#000" stroke-width="5.9" stroke-linecap="round"/><path d="M331 492.8L303.4 460.9" stroke="#000" stroke-width="6.1" stroke-linecap="round"/><path d="M745.2 329.4L690 345.8" stroke="#000" stroke-width="4.0" stroke-linecap="round"/><path d="M690 345.8L628.9 364" stroke="#000" stroke-width="4.2" stroke-linecap="round"/><path d="M628.9 364L561.1 384.2" stroke="#000" stroke-width="4.4" stroke-linecap="round"/><path d="M561.1 384.2L485.3 406.8" stroke="#000" stroke-width="4.7" stroke-linecap="round"/><path d="M485.3 406.8L400 432.2" stroke="#000" stroke-width="4.9" stroke-linecap="round"/><path d="M400 432.2L303.4 460.9" stroke="#000" stroke-width="5.3" stroke-linecap="round"/><path d="M989.9 509.7L1008.9 522.3" stroke="#000" stroke-width="3.1" stroke-linecap="round"/><path d="M1008.9 522.3L1028.8 535.6" stroke="#000" stroke-width="3.2" stroke-linecap="round"/><path d="M1028.8 535.6L1049.8 549.5" stroke="#000" stroke-width="3.3" stroke-linecap="round"/><path d="M1049.8 549.5L1071.9 564.1" stroke="#000" stroke-width="3.4" stroke-linecap="round"/><path d="M1071.9 564.1L1095.3 579.6" stroke="#000" stroke-width="3.5" stroke-linecap="round"/><path d="M1095.3 579.6L1119.9 596" stroke="#000" stroke-width="3.6" stroke-linecap="round"/><path d="M989.9 509.7L991.1 481.7" stroke="#000" stroke-width="3.1" stroke-linecap="round"/><path d="M991.1 481.7L992.4 451.4" stroke="#000" stroke-width="3.3" stroke-linecap="round"/><path d="M992.4 451.4L993.7 418.5" stroke="#000" stroke-width="3.4" stroke-linecap="round"/><path d="M993.7 418.5L995.3 382.7" stroke="#000" stroke-width="3.6" stroke-linecap="round"/><path d="M995.3 382.7L996.9 343.5" stroke="#000" stroke-width="3.7" stroke-linecap="round"/><path d="M996.9 343.5L998.7 300.4" stroke="#000" stroke-width="3.9" stroke-linecap="round"/><path d="M1128.6 254.6L1153.3 261.5" stroke="#000" stroke-width="3.4" stroke-linecap="round"/><path d="M1153.3 261.5L1179.3 268.8" stroke="#000" stroke-width="3.5" stroke-linecap="round"/><path d="M1179.3 268.8L1206.9 276.6" stroke="#000" stroke-width="3.6" stroke-linecap="round"/><path d="M1206.9 276.6L1236.1 284.7" stroke="#000" stroke-width="3.7" stroke-linecap="round"/><path d="M1236.1 284.7L1267.1 293.4" stroke="#000" stroke-width="3.8" stroke-linecap="round"/><path d="M1267.1 293.4L1300 302.6" stroke="#000" stroke-width="4.0" stroke-linecap="round"/><path d="M1128.6 254.6L1109.8 261.3" stroke="#000" stroke-width="3.4" stroke-linecap="round"/><path d="M1109.8 261.3L1089.9 268.2" stroke="#000" stroke-width="3.5" stroke-linecap="round"/><path d="M1089.9 268.2L1069 275.6" stroke="#000" stroke-width="3.6" stroke-linecap="round"/><path d="M1069 275.6L1046.9 283.4" stroke="#000" stroke-width="3.7" stroke-linecap="round"/><path d="M1046.9 283.4L1023.5 291.6" stroke="#000" stroke-width="3.8" stroke-linecap="round"/><path d="M1023.5 291.6L998.7 300.4" stroke="#000" stroke-width="3.9" stroke-linecap="round"/><path d="M998.7 300.4L1023.8 310" stroke="#000" stroke-width="4.1" stroke-linecap="round"/><path d="M1023.8 310L1050.6 320.4" stroke="#000" stroke-width="4.2" stroke-linecap="round"/><path d="M1050.6 320.4L1079.2 331.4" stroke="#000" stroke-width="4.3" stroke-linecap="round"/><path d="M1079.2 331.4L1109.8 343.2" stroke="#000" stroke-width="4.5" stroke-linecap="round"/><path d="M1109.8 343.2L1142.8 355.9" stroke="#000" stroke-width="4.6" stroke-linecap="round"/><path d="M1142.8 355.9L1178.2 369.6" stroke="#000" stroke-width="4.8" stroke-linecap="round"/><path d="M1221.9 512.7L1232.3 484.7" stroke="#000" stroke-width="3.2" stroke-linecap="round"/><path d="M1232.3 484.7L1243.6 454.3" stroke="#000" stroke-width="3.3" stroke-linecap="round"/><path d="M1243.6 454.3L1255.9 421.3" stroke="#000" stroke-width="3.4" stroke-linecap="round"/><path d="M1255.9 421.3L1269.3 385.3" stroke="#000" stroke-width="3.6" stroke-linecap="round"/><path d="M1269.3 385.3L1283.9 345.9" stroke="#000" stroke-width="3.7" stroke-linecap="round"/><path d="M1283.9 345.9L1300 302.6" stroke="#000" stroke-width="3.9" stroke-linecap="round"/><path d="M1221.9 512.7L1206.9 524.9" stroke="#000" stroke-width="3.1" stroke-linecap="round"/><path d="M1206.9 524.9L1191.2 537.7" stroke="#000" stroke-width="3.2" stroke-linecap="round"/><path d="M1191.2 537.7L1174.7 551.2" stroke="#000" stroke-width="3.3" stroke-linecap="round"/><path d="M1174.7 551.2L1157.4 565.4" stroke="#000" stroke-width="3.4" stroke-linecap="round"/><path d="M1157.4 565.4L1139.2 580.3" stroke="#000" stroke-width="3.5" stroke-linecap="round"/><path d="M1139.2 580.3L1119.9 596" stroke="#000" stroke-width="3.6" stroke-linecap="round"/><path d="M1119.9 596L1127.4 567" stroke="#000" stroke-width="3.7" stroke-linecap="round"/><path d="M1127.4 567L1135.6 535.3" stroke="#000" stroke-width="3.9" stroke-linecap="round"/><path d="M1135.6 535.3L1144.6 500.2" stroke="#000" stroke-width="4.1" stroke-linecap="round"/><path d="M1144.6 500.2L1154.6 461.4" stroke="#000" stroke-width="4.3" stroke-linecap="round"/><path d="M1154.6 461.4L1165.7 418.2" stroke="#000" stroke-width="4.5" stroke-linecap="round"/><path d="M1165.7 418.2L1178.2 369.6" stroke="#000" stroke-width="4.8" stroke-linecap="round"/><path d="M1300 302.6L1282.9 312.1" stroke="#000" stroke-width="4.1" stroke-linecap="round"/><path d="M1282.9 312.1L1264.7 322.1" stroke="#000" stroke-width="4.2" stroke-linecap="round"/><path d="M1264.7 322.1L1245.2 332.8" stroke="#000" stroke-width="4.4" stroke-linecap="round"/><path d="M1245.2 332.8L1224.4 344.2" stroke="#000" stroke-width="4.5" stroke-linecap="round"/><path d="M1224.4 344.2L1202.1 356.5" stroke="#000" stroke-width="4.7" stroke-linecap="round"/><path d="M1202.1 356.5L1178.2 369.6" stroke="#000" stroke-width="4.8" stroke-linecap="round"/><path d="M1193.6 578.1L1350.2 671.2" stroke="#000" stroke-width="5.7" stroke-linecap="round"/><path d="M1350.2 671.2L1567 800.1" stroke="#000" stroke-width="6.7" stroke-linecap="round"/><path d="M1567 800.1L1887.1 990.3" stroke="#000" stroke-width="8.2" stroke-linecap="round"/><path d="M1887.1 990.3L2407 1299.4" stroke="#000" stroke-width="10.4" stroke-linecap="round"/><path d="M2407 1299.4L3399.3 1889.2" stroke="#000" stroke-width="11.2" stroke-linecap="round"/><path d="M3399.3 1889.2L6043.3 3460.9" stroke="#000" stroke-width="11.2" stroke-linecap="round"/><path d="M1193.6 578.1L1200.2 560.1" stroke="#000" stroke-width="3.9" stroke-linecap="round"/><path d="M1200.2 560.1L1207.2 541" stroke="#000" stroke-width="4.0" stroke-linecap="round"/><path d="M1207.2 541L1214.6 520.8" stroke="#000" stroke-width="4.1" stroke-linecap="round"/><path d="M1214.6 520.8L1222.4 499.4" stroke="#000" stroke-width="4.2" stroke-linecap="round"/><path d="M1222.4 499.4L1230.8 476.5" stroke="#000" stroke-width="4.4" stroke-linecap="round"/><path d="M1230.8 476.5L1239.7 452.2" stroke="#000" stroke-width="4.5" stroke-linecap="round"/><path d="M1366 358.6L1539.6 412.9" stroke="#000" stroke-width="3.9" stroke-linecap="round"/><path d="M1539.6 412.9L1775.2 486.6" stroke="#000" stroke-width="4.5" stroke-linecap="round"/><path d="M1775.2 486.6L2113.5 592.5" stroke="#000" stroke-width="5.4" stroke-linecap="round"/><path d="M2113.5 592.5L2640.3 757.3" stroke="#000" stroke-width="6.7" stroke-linecap="round"/><path d="M2640.3 757.3L3574 1049.4" stroke="#000" stroke-width="8.0" stroke-linecap="round"/><path d="M3574 1049.4L5682.4 1709" stroke="#000" stroke-width="8.0" stroke-linecap="round"/><path d="M1366 358.6L1348.7 371.4" stroke="#000" stroke-width="3.7" stroke-linecap="round"/><path d="M1348.7 371.4L1330.2 385.2" stroke="#000" stroke-width="3.8" stroke-linecap="round"/><path d="M1330.2 385.2L1310.2 400" stroke="#000" stroke-width="4.0" stroke-linecap="round"/><path d="M1310.2 400L1288.5 416" stroke="#000" stroke-width="4.1" stroke-linecap="round"/><path d="M1288.5 416L1265.1 433.3" stroke="#000" stroke-width="4.3" stroke-linecap="round"/><path d="M1265.1 433.3L1239.7 452.2" stroke="#000" stroke-width="4.5" stroke-linecap="round"/><path d="M1239.7 452.2L1442.5 542.2" stroke="#000" stroke-width="7.0" stroke-linecap="round"/><path d="M1442.5 542.2L1746.3 677" stroke="#000" stroke-width="8.5" stroke-linecap="round"/><path d="M1746.3 677L2251.6 901.2" stroke="#000" stroke-width="10.9" stroke-linecap="round"/><path d="M2251.6 901.2L3258.3 1348" stroke="#000" stroke-width="11.2" stroke-linecap="round"/><path d="M3258.3 1348L6247.3 2674.3" stroke="#000" stroke-width="11.2" stroke-linecap="round"/><path d="M6247.3 2674.3L390197.9 173049.2" stroke="#000" stroke-width="11.2" stroke-linecap="round"/><path d="M3664.7 1498.7L3872.1 1520.3" stroke="#000" stroke-width="8.0" stroke-linecap="round"/><path d="M3872.1 1520.3L4113.9 1545.5" stroke="#000" stroke-width="8.0" stroke-linecap="round"/><path d="M4113.9 1545.5L4399.5 1575.3" stroke="#000" stroke-width="8.0" stroke-linecap="round"/><path d="M4399.5 1575.3L4742 1611" stroke="#000" stroke-width="8.0" stroke-linecap="round"/><path d="M4742 1611L5160.2 1654.6" stroke="#000" stroke-width="8.0" stroke-linecap="round"/><path d="M5160.2 1654.6L5682.4 1709" stroke="#000" stroke-width="8.0" stroke-linecap="round"/><path d="M3664.7 1498.7L3854.3 1655.1" stroke="#000" stroke-width="8.0" stroke-linecap="round"/><path d="M3854.3 1655.1L4088 1847.9" stroke="#000" stroke-width="8.0" stroke-linecap="round"/><path d="M4088 1847.9L4383.4 2091.5" stroke="#000" stroke-width="8.0" stroke-linecap="round"/><path d="M4383.4 2091.5L4768.5 2409.3" stroke="#000" stroke-width="8.0" stroke-linecap="round"/><path d="M4768.5 2409.3L5291.7 2840.9" stroke="#000" stroke-width="8.0" stroke-linecap="round"/><path d="M5291.7 2840.9L6043.3 3460.9" stroke="#000" stroke-width="8.0" stroke-linecap="round"/><path d="M6043.3 3460.9L7044.1 3902.7" stroke="#000" stroke-width="8.0" stroke-linecap="round"/><path d="M7044.1 3902.7L8535.5 4561.1" stroke="#000" stroke-width="8.0" stroke-linecap="round"/><path d="M8535.5 4561.1L10995.6 5647.2" stroke="#000" stroke-width="8.0" stroke-linecap="round"/><path d="M10995.6 5647.2L15821.8 7777.7" stroke="#000" stroke-width="8.0" stroke-linecap="round"/><path d="M15821.8 7777.7L29590.5 13856" stroke="#000" stroke-width="8.0" stroke-linecap="round"/><path d="M29590.5 13856L390197.9 173049.2" stroke="#000" stroke-width="8.0" stroke-linecap="round"/><path d="M5682.4 1709L6440 2046.6" stroke="#000" stroke-width="8.0" stroke-linecap="round"/><path d="M6440 2046.6L7570.9 2550.5" stroke="#000" stroke-width="8.0" stroke-linecap="round"/><path d="M7570.9 2550.5L9440.9 3383.8" stroke="#000" stroke-width="8.0" stroke-linecap="round"/><path d="M9440.9 3383.8L13126.6 5026.1" stroke="#000" stroke-width="8.0" stroke-linecap="round"/><path d="M13126.6 5026.1L23767.7 9767.8" stroke="#000" stroke-width="8.0" stroke-linecap="round"/><path d="M23767.7 9767.8L390197.9 173049.2" stroke="#000" stroke-width="8.0" stroke-linecap="round"/><path d="M524.6 598.4L531.6 612.2" stroke="#000" stroke-width="4.9" stroke-linecap="round"/><path d="M531.6 612.2L538.9 626.7" stroke="#000" stroke-width="5.0" stroke-linecap="round"/><path d="M538.9 626.7L546.5 641.9" stroke="#000" stroke-width="5.1" stroke-linecap="round"/><path d="M546.5 641.9L554.6 657.8" stroke="#000" stroke-width="5.2" stroke-linecap="round"/><path d="M554.6 657.8L563.1 674.5" stroke="#000" stroke-width="5.3" stroke-linecap="round"/><path d="M563.1 674.5L572 692.1" stroke="#000" stroke-width="5.5" stroke-linecap="round"/><path d="M524.6 598.4L517.2 587.9" stroke="#000" stroke-width="4.8" stroke-linecap="round"/><path d="M517.2 587.9L509.5 577.1" stroke="#000" stroke-width="4.9" stroke-linecap="round"/><path d="M509.5 577.1L501.6 565.8" stroke="#000" stroke-width="5.0" stroke-linecap="round"/><path d="M501.6 565.8L493.5 554.2" stroke="#000" stroke-width="5.1" stroke-linecap="round"/><path d="M493.5 554.2L485 542.2" stroke="#000" stroke-width="5.2" stroke-linecap="round"/><path d="M485 542.2L476.2 529.6" stroke="#000" stroke-width="5.3" stroke-linecap="round"/><path d="M775.8 414.2L786.9 422.5" stroke="#000" stroke-width="4.2" stroke-linecap="round"/><path d="M786.9 422.5L798.4 431.1" stroke="#000" stroke-width="4.3" stroke-linecap="round"/><path d="M798.4 431.1L810.4 440.1" stroke="#000" stroke-width="4.4" stroke-linecap="round"/><path d="M810.4 440.1L823 449.4" stroke="#000" stroke-width="4.5" stroke-linecap="round"/><path d="M823 449.4L836 459.2" stroke="#000" stroke-width="4.6" stroke-linecap="round"/><path d="M836 459.2L849.7 469.4" stroke="#000" stroke-width="4.7" stroke-linecap="round"/><path d="M775.8 414.2L735.3 429.8" stroke="#000" stroke-width="4.2" stroke-linecap="round"/><path d="M735.3 429.8L691.6 446.7" stroke="#000" stroke-width="4.4" stroke-linecap="round"/><path d="M691.6 446.7L644.3 464.9" stroke="#000" stroke-width="4.6" stroke-linecap="round"/><path d="M644.3 464.9L593 484.6" stroke="#000" stroke-width="4.8" stroke-linecap="round"/><path d="M593 484.6L537.2 506.1" stroke="#000" stroke-width="5.0" stroke-linecap="round"/><path d="M537.2 506.1L476.2 529.6" stroke="#000" stroke-width="5.2" stroke-linecap="round"/><path d="M476.2 529.6L482.7 543.3" stroke="#000" stroke-width="5.4" stroke-linecap="round"/><path d="M482.7 543.3L489.6 557.6" stroke="#000" stroke-width="5.5" stroke-linecap="round"/><path d="M489.6 557.6L496.8 572.7" stroke="#000" stroke-width="5.7" stroke-linecap="round"/><path d="M496.8 572.7L504.5 588.7" stroke="#000" stroke-width="5.8" stroke-linecap="round"/><path d="M504.5 588.7L512.6 605.6" stroke="#000" stroke-width="6.0" stroke-linecap="round"/><path d="M512.6 605.6L521.2 623.5" stroke="#000" stroke-width="6.2" stroke-linecap="round"/><path d="M859.6 536.4L858 526.1" stroke="#000" stroke-width="4.3" stroke-linecap="round"/><path d="M858 526.1L856.5 515.5" stroke="#000" stroke-width="4.4" stroke-linecap="round"/><path d="M856.5 515.5L854.9 504.5" stroke="#000" stroke-width="4.5" stroke-linecap="round"/><path d="M854.9 504.5L853.2 493.2" stroke="#000" stroke-width="4.5" stroke-linecap="round"/><path d="M853.2 493.2L851.5 481.5" stroke="#000" stroke-width="4.6" stroke-linecap="round"/><path d="M851.5 481.5L849.7 469.4" stroke="#000" stroke-width="4.7" stroke-linecap="round"/><path d="M859.6 536.4L821 557.3" stroke="#000" stroke-width="4.4" stroke-linecap="round"/><path d="M821 557.3L779.3 579.9" stroke="#000" stroke-width="4.6" stroke-linecap="round"/><path d="M779.3 579.9L734 604.4" stroke="#000" stroke-width="4.7" stroke-linecap="round"/><path d="M734 604.4L684.8 631.1" stroke="#000" stroke-width="5.0" stroke-linecap="round"/><path d="M684.8 631.1L631 660.2" stroke="#000" stroke-width="5.2" stroke-linecap="round"/><path d="M631 660.2L572 692.1" stroke="#000" stroke-width="5.4" stroke-linecap="round"/><path d="M572 692.1L564.3 681.8" stroke="#000" stroke-width="5.6" stroke-linecap="round"/><path d="M564.3 681.8L556.4 671.1" stroke="#000" stroke-width="5.7" stroke-linecap="round"/><path d="M556.4 671.1L548.1 659.9" stroke="#000" stroke-width="5.8" stroke-linecap="round"/><path d="M548.1 659.9L539.5 648.3" stroke="#000" stroke-width="6.0" stroke-linecap="round"/><path d="M539.5 648.3L530.5 636.1" stroke="#000" stroke-width="6.1" stroke-linecap="round"/><path d="M530.5 636.1L521.2 623.5" stroke="#000" stroke-width="6.2" stroke-linecap="round"/><path d="M849.7 469.4L806.7 489.6" stroke="#000" stroke-width="4.8" stroke-linecap="round"/><path d="M806.7 489.6L759.9 511.5" stroke="#000" stroke-width="5.0" stroke-linecap="round"/><path d="M759.9 511.5L708.6 535.6" stroke="#000" stroke-width="5.3" stroke-linecap="round"/><path d="M708.6 535.6L652.3 562" stroke="#000" stroke-width="5.5" stroke-linecap="round"/><path d="M652.3 562L590.1 591.1" stroke="#000" stroke-width="5.8" stroke-linecap="round"/><path d="M590.1 591.1L521.2 623.5" stroke="#000" stroke-width="6.1" stroke-linecap="round"/><path d="M740.5 270L842.5 247.6" stroke="#000" stroke-width="4.6" stroke-linecap="round"/><path d="M756.6 456.9L801.7 527.2" stroke="#c43434" stroke-width="3.4" stroke-linecap="round" opacity="0.9"/><path d="M752 458L757 449L764 462Z" fill="#c43434"/><path d="M736.5 487L796.7 470.3" stroke="#c43434" stroke-width="3.4" stroke-linecap="round" opacity="0.9"/><path d="M792 466L805 469L794 476Z" fill="#c43434"/><path d="M746.6 513.8L820.1 488.7" stroke="#c43434" stroke-width="1.8" stroke-linecap="butt" opacity="0.9"/><path d="M770 470L790 520" stroke="#c43434" stroke-width="2.5" stroke-linecap="butt" opacity="0.8"/><path d="M716.1 536.3L733.8 527.4L741.8 551.3L723.2 557.5Z" fill="#424242"/><path d="M748.2 498.7L697 516" stroke="#0a50e6" stroke-width="4" stroke-linecap="butt"/><path d="M688 519L701 509L703 520Z" fill="#0a50e6"/><path d="M724.8 540.5L700 548" stroke="#0a50e6" stroke-width="4" stroke-linecap="butt"/><path d="M690.5 551L703 543L704 553Z" fill="#0a50e6"/><path d="M713.1 483.7L733.2 560" stroke="#f00828" stroke-width="3" stroke-linecap="butt"/><path d="M704.7 495.4L731.5 540.5" stroke="#48c41c" stroke-width="4.2" stroke-linecap="round"/><path d="M701 490L714 497L705 503Z" fill="#48c41c"/><path d="M728 557L738 557L733 565Z" fill="#f00828"/><rect x="646.2" y="553.9" width="20.1" height="18.4" fill="#00ff00"/><path d="M642.5 558L646.5 556L646.5 566L643.5 566Z" fill="#c8e23c"/><path d="M574.5 592L635.5 599L624.5 634L565.5 628.5Z" fill="none" stroke="#c83838" stroke-width="1.8" stroke-linejoin="round" stroke-linecap="round"/><path d="M581 613L612 607L620 630L588 626Z" fill="none" stroke="#c83838" stroke-width="1.2" stroke-linejoin="round" stroke-linecap="round"/><path d="M608 597L600 632" stroke="#c83838" stroke-width="2.6" stroke-linecap="butt"/><circle cx="602.5" cy="607" r="10.5" fill="#ffa40a" stroke="none" stroke-width="0"/><path d="M586 608L594 606L592 622L585 620Z" fill="#ffa40a"/><path d="M592 622L607 628L618 618L612 606" fill="none" stroke="#a4ff20" stroke-width="2" stroke-linejoin="round" stroke-linecap="round"/><path d="M590 612L600 626L596 618L604 622" fill="none" stroke="#a4ff20" stroke-width="1.5" stroke-linejoin="round" stroke-linecap="round"/><path d="M636 600L604 625" stroke="#e8206a" stroke-width="1" stroke-linecap="butt"/><path d="M585 615L596 620L590 626L598 612" fill="none" stroke="#e03050" stroke-width="0.8" stroke-linejoin="round" stroke-linecap="round"/><path d="M1438.2 530.6L1463.3 530.6L1479.6 543.2L1469.6 552L1450.8 543.2Z" fill="#f2f2f4"/><path d="M1466 546L1474 543L1580 600.5L1578 602Z" fill="#f0f0f2"/><rect x="1499.7" y="558.2" width="23.8" height="12.6" fill="#ff0000"/><path d="M730.3 653.9L656.3 834.5M730.3 653.9L905.8 661.4M747.8 654.6L678.6 835.8M722.9 672.0L903.2 680.0M765.4 655.4L700.9 837.0M715.5 690.0L900.5 698.5M782.9 656.1L723.3 838.2M708.1 708.1L897.9 717.1M800.5 656.9L745.6 839.5M700.7 726.1L895.3 735.6M818.0 657.6L767.9 840.8M693.3 744.2L892.6 754.2M835.6 658.4L790.2 842.0M685.9 762.3L890.0 772.8M853.1 659.1L812.5 843.2M678.5 780.3L887.4 791.3M870.7 659.9L834.9 844.5M671.1 798.4L884.8 809.9M888.2 660.6L857.2 845.8M663.7 816.4L882.1 828.4M905.8 661.4L879.5 847.0M656.3 834.5L879.5 847.0" stroke="#f2a4ac" stroke-width="3.700" stroke-linecap="square"/><path d="M730.3 653.9L656.3 834.5M730.3 653.9L905.8 661.4M747.8 654.6L678.6 835.8M722.9 672.0L903.2 680.0M765.4 655.4L700.9 837.0M715.5 690.0L900.5 698.5M782.9 656.1L723.3 838.2M708.1 708.1L897.9 717.1M800.5 656.9L745.6 839.5M700.7 726.1L895.3 735.6M818.0 657.6L767.9 840.8M693.3 744.2L892.6 754.2M835.6 658.4L790.2 842.0M685.9 762.3L890.0 772.8M853.1 659.1L812.5 843.2M678.5 780.3L887.4 791.3M870.7 659.9L834.9 844.5M671.1 798.4L884.8 809.9M888.2 660.6L857.2 845.8M663.7 816.4L882.1 828.4M905.8 661.4L879.5 847.0M656.3 834.5L879.5 847.0" stroke="#e48e98" stroke-width="1" stroke-linecap="square" opacity=".6" transform="translate(0.500 1.200)"/><path d="M783 656.5L800.5 662.7L888.3 779.3L875.7 775.5L785.5 666.5Z" fill="#f2f0f0"/><path d="M808.0 697.0l14 3l4 14M824.5 716.5l14 3l4 14M841.0 736.0l14 3l4 14M857.5 755.5l14 3l4 14M874.0 775.0l14 3l4 14" stroke="#f2a4ac" stroke-width="3"/><circle cx="721.5" cy="748" r="47.5" fill="#c4c4f0" stroke="none" stroke-width="0" opacity="0.72"/><path d="M667.6 625L707.7 705.3" stroke="#ff0808" stroke-width="3.6" stroke-linecap="butt"/><path d="M667.6 625L707.7 705.3" stroke="#ff7070" stroke-width="0.9" stroke-linecap="butt"/><path d="M694 665.2L715.2 705.3" stroke="#ff0808" stroke-width="3.6" stroke-linecap="butt"/><path d="M694 665.2L715.2 705.3" stroke="#ff7070" stroke-width="0.9" stroke-linecap="butt"/><path d="M709 612.5L757.9 712.9" stroke="#ff0808" stroke-width="3.6" stroke-linecap="butt"/><path d="M709 612.5L757.9 712.9" stroke="#ff7070" stroke-width="0.9" stroke-linecap="butt"/><path d="M727.8 641.4L737.8 690.3" stroke="#ff0808" stroke-width="3.6" stroke-linecap="butt"/><path d="M727.8 641.4L737.8 690.3" stroke="#ff7070" stroke-width="0.9" stroke-linecap="butt"/><path d="M726.5 592L760.4 680.3" stroke="#ff0808" stroke-width="3.6" stroke-linecap="butt"/><path d="M726.5 592L760.4 680.3" stroke="#ff7070" stroke-width="0.9" stroke-linecap="butt"/><path d="M755.4 630L786.7 717.9" stroke="#ff0808" stroke-width="3.6" stroke-linecap="butt"/><path d="M755.4 630L786.7 717.9" stroke="#ff7070" stroke-width="0.9" stroke-linecap="butt"/><rect x="709" y="700.3" width="12.5" height="8.7" fill="#ff0000"/><rect x="709" y="709" width="12.5" height="5" fill="#ffb0c0"/><path d="M719 715L729 737" stroke="#80f0a0" stroke-width="3.4" stroke-linecap="butt"/><text x="1104" y="756.500" font-family="Liberation Sans,sans-serif" font-size="34" fill="#fff" stroke="#000" stroke-width="6.500" stroke-linejoin="round" paint-order="stroke">La</text><path d="M1186.2 693.6L1263.2 749.3L1244.6 781.2L1190.2 851.5L1117.2 786.5L1134.4 746.7Z" fill="#a82222"/><path d="M1186.2 693.6L1134.4 746.7L1117.2 786.5L1190.2 851.5L1212.8 810.4" fill="none" stroke="#e88a22" stroke-width="3" stroke-linejoin="round" stroke-linecap="round"/><path d="M1134.4 746.7L1212.8 810.4" fill="none" stroke="#e88a22" stroke-width="4.4" stroke-linejoin="round" stroke-linecap="round"/><path d="M1212.8 810.4L1244.6 781.2" fill="none" stroke="#e88a22" stroke-width="3" stroke-linejoin="round" stroke-linecap="round"/><path d="M1190.2 851.5L1240 790" fill="none" stroke="#e88a22" stroke-width="3" stroke-linejoin="round" stroke-linecap="round"/><path d="M1186.2 693.6L1222 720" fill="none" stroke="#e88a22" stroke-width="3" stroke-linejoin="round" stroke-linecap="butt"/><path d="M1121 788L1212 809M1212 809L1200 730" stroke="#8040c0" stroke-width="1" stroke-dasharray="3 3" opacity=".8"/><path d="M1147.7 604.6L1109.2 677.6M1151.5 611.0L1114.1 681.9M1155.4 617.3L1119.0 686.3M1159.2 623.6L1123.9 690.6M1163.1 630.0L1128.8 695.0M1166.9 636.4L1133.7 699.3M1170.8 642.7L1138.6 703.7M1174.6 649.1L1143.5 708.0M1178.5 655.4L1148.4 712.3M1182.3 661.8L1153.3 716.7M1186.2 668.1L1158.2 721.0M1190.0 674.5L1163.2 725.4M1193.8 680.8L1168.1 729.7M1197.7 687.1L1173.0 734.1M1201.5 693.5L1177.9 738.4M1205.4 699.9L1182.8 742.7M1209.2 706.2L1187.7 747.1M1213.1 712.5L1192.6 751.4M1216.9 718.9L1197.5 755.8M1220.8 725.2L1202.4 760.1M1224.6 731.6L1207.3 764.5M1228.5 738.0L1212.2 768.8M1232.3 744.3L1217.1 773.1M1236.2 750.6L1222.0 777.5M1240.4 758.6L1227.3 783.4M1244.6 761.6L1231.1 787.2M1249.2 764.2L1235.3 790.5M1254.0 766.2L1239.7 793.3M1259.1 767.6L1244.4 795.4M1264.3 768.3L1249.2 797.0M1269.5 768.5L1253.9 798.1M1274.7 768.0L1258.2 799.3M1279.9 766.9L1262.5 799.8M1284.8 765.1L1266.5 799.8M1289.5 762.8L1270.3 799.2M1293.9 759.9L1273.8 798.0M1297.9 756.6L1276.9 796.3M1301.4 752.7L1278.4 796.4M1304.5 748.5L1279.0 796.9M1307.0 744.0L1279.0 797.0M1308.9 739.1L1278.4 797.0M1310.2 734.1L1276.8 797.5M1310.9 729.0L1274.5 797.9M1310.9 723.8L1272.4 796.8M1310.3 718.6L1271.8 791.6M1309.1 713.6L1270.6 786.6M1307.3 708.7L1268.8 781.7M1304.9 704.1L1266.4 777.1M1301.9 699.8L1263.4 772.8M1298.4 695.9L1259.9 768.9M1294.5 692.5L1256.0 765.5M1290.1 689.6L1251.6 762.6M1285.5 687.2L1247.0 760.2M1280.6 685.4L1242.1 758.4M1275.5 684.1L1237.0 757.1M1270.3 683.6L1231.8 756.6M1265.0 683.6L1226.5 756.6M1259.8 684.3L1221.3 757.3M1254.7 685.6L1216.2 758.6M1249.8 687.5L1211.3 760.5M1245.2 690.0L1206.7 763.0" stroke="#ff0000" stroke-width="1.800"/><g font-family="Liberation Sans,sans-serif" font-size="5" font-weight="700" fill="#fff" stroke="#222" stroke-width="1.100" paint-order="stroke" text-anchor="middle"><text x="1147.7" y="606.1">0.0</text><text x="1151.5" y="612.5">0.1</text><text x="1155.4" y="618.8">0.2</text><text x="1159.2" y="625.1">0.3</text><text x="1163.1" y="631.5">0.4</text><text x="1166.9" y="637.9">0.5</text><text x="1170.8" y="644.2">0.6</text><text x="1174.6" y="650.6">0.7</text><text x="1178.5" y="656.9">0.8</text><text x="1182.3" y="663.2">0.9</text><text x="1186.2" y="669.6">1.0</text><text x="1190.0" y="676.0">1.1</text><text x="1193.8" y="682.3">1.2</text><text x="1197.7" y="688.6">1.3</text><text x="1201.5" y="695.0">1.4</text><text x="1205.4" y="701.4">1.5</text><text x="1209.2" y="707.7">1.6</text><text x="1213.1" y="714.0">1.7</text><text x="1216.9" y="720.4">1.8</text><text x="1220.8" y="726.8">1.9</text><text x="1224.6" y="733.1">0.0</text><text x="1228.5" y="739.5">0.1</text><text x="1232.3" y="745.8">0.2</text><text x="1236.2" y="752.1">0.3</text><text x="1240.4" y="760.1">0.4</text><text x="1244.6" y="763.1">0.5</text><text x="1249.2" y="765.7">0.6</text><text x="1254.0" y="767.7">0.7</text><text x="1259.1" y="769.1">0.8</text><text x="1264.3" y="769.8">0.9</text><text x="1269.5" y="770.0">1.0</text><text x="1274.7" y="769.5">1.1</text><text x="1279.9" y="768.4">1.2</text><text x="1284.8" y="766.6">1.3</text><text x="1289.5" y="764.3">1.4</text><text x="1293.9" y="761.4">1.5</text><text x="1297.9" y="758.1">1.6</text><text x="1301.4" y="754.2">1.7</text><text x="1304.5" y="750.0">1.8</text><text x="1307.0" y="745.5">1.9</text><text x="1308.9" y="740.6">0.0</text><text x="1310.2" y="735.6">0.1</text><text x="1310.9" y="730.5">0.2</text><text x="1310.9" y="725.3">0.3</text><text x="1310.3" y="720.1">0.4</text><text x="1309.1" y="715.1">0.5</text><text x="1307.3" y="710.2">0.6</text><text x="1304.9" y="705.6">0.7</text><text x="1301.9" y="701.3">0.8</text><text x="1298.4" y="697.4">0.9</text><text x="1294.5" y="694.0">1.0</text><text x="1290.1" y="691.1">1.1</text><text x="1285.5" y="688.7">1.2</text><text x="1280.6" y="686.9">1.3</text><text x="1275.5" y="685.6">1.4</text><text x="1270.3" y="685.1">1.5</text><text x="1265.0" y="685.1">1.6</text><text x="1259.8" y="685.8">1.7</text><text x="1254.7" y="687.1">1.8</text><text x="1249.8" y="689.0">1.9</text><text x="1245.2" y="691.5">0.0</text></g><path d="M1584.3 965L1638 943" stroke="#3cc47c" stroke-width="2.2" stroke-linecap="butt"/><path d="M1591 965.5L1638 947.5" stroke="#7432d2" stroke-width="2.2" stroke-linecap="butt"/><g transform="rotate(-41 975 906)"><rect x="886" y="873" width="178" height="66" rx="33" fill="#404040"/></g><path d="M998 813L897.2 889" stroke="#f0c484" stroke-width="12.5" stroke-linecap="round"/><path d="M1000 826L922 885" stroke="#f0c484" stroke-width="8" stroke-linecap="round"/><path d="M998 813L1068.8 903.3" stroke="#f0c484" stroke-width="11.5" stroke-linecap="round"/><path d="M900 892L1022 906" stroke="#f0c484" stroke-width="12" stroke-linecap="round"/><path d="M1022 906L1068 904" stroke="#f0c484" stroke-width="10" stroke-linecap="round"/><path d="M897.2 889L961 968" stroke="#f0c484" stroke-width="13" stroke-linecap="round"/><path d="M1068.8 903.3L1012 968" stroke="#f0c484" stroke-width="11" stroke-linecap="round"/><path d="M1024.6 834L1026 968" stroke="#f0c484" stroke-width="10.5" stroke-linecap="round"/><path d="M918 884L1020 903" stroke="#f0c484" stroke-width="6" stroke-linecap="round"/><path d="M1042 868L1030 960" stroke="#f0c484" stroke-width="6" stroke-linecap="round"/><path d="M999 815L898.2 891" stroke="#e0ae68" stroke-width="1.2" stroke-linecap="butt" opacity="0.7"/><path d="M1001 828L923 887" stroke="#e0ae68" stroke-width="1.2" stroke-linecap="butt" opacity="0.7"/><path d="M999 815L1069.8 905.3" stroke="#e0ae68" stroke-width="1.2" stroke-linecap="butt" opacity="0.7"/><path d="M901 894L1023 908" stroke="#e0ae68" stroke-width="1.2" stroke-linecap="butt" opacity="0.7"/><path d="M956 851L960 862" stroke="#f0c484" stroke-width="6" stroke-linecap="butt"/><path d="M985.3 877.3L999.9 890.8L996.6 911.5L978.7 918.7L964.1 905.2L967.4 884.5Z" fill="none" stroke="#d03232" stroke-width="1.8" stroke-linejoin="round" stroke-linecap="round"/><path d="M985.3 877.3L984 898L978.7 918.7L979 898Z" fill="#d03232"/><path d="M964.1 905.2L982 896L999.9 890.8L982 901Z" fill="#d03232"/><path d="M967.4 884.5L996.6 911.5" stroke="#d03232" stroke-width="1" stroke-linecap="butt"/><path d="M967.4 884.5L999.9 890.8" stroke="#d03232" stroke-width="1" stroke-linecap="butt"/><text x="456.8" y="278.2" font-family="Liberation Sans,sans-serif" font-size="19.5" fill="#fff" stroke="#000" stroke-width="4.5" stroke-linejoin="round" paint-order="stroke"  textLength="57.5" lengthAdjust="spacingAndGlyphs">Boxes</text><text x="711" y="211.6" font-family="Liberation Sans,sans-serif" font-size="13.6" fill="#fff" stroke="#000" stroke-width="3.4" stroke-linejoin="round" paint-order="stroke"  textLength="55.5" lengthAdjust="spacingAndGlyphs">Cylinders</text><text x="886.5" y="230.2" font-family="Liberation Sans,sans-serif" font-size="17.6" fill="#fff" stroke="#000" stroke-width="4" stroke-linejoin="round" paint-order="stroke"  textLength="61.2" lengthAdjust="spacingAndGlyphs">Spheres</text><text x="1138.3" y="205.8" font-family="Liberation Sans,sans-serif" font-size="26" fill="#fff" stroke="#000" stroke-width="5.5" stroke-linejoin="round" paint-order="stroke"  textLength="67" lengthAdjust="spacingAndGlyphs">Paths</text><text x="637.2" y="478.8" font-family="Liberation Sans,sans-serif" font-size="23.6" fill="#fff" stroke="#000" stroke-width="5" stroke-linejoin="round" paint-order="stroke"  textLength="50.8" lengthAdjust="spacingAndGlyphs">Misc</text><text x="797.5" y="688.4" font-family="Liberation Sans,sans-serif" font-size="20.4" fill="#fff" stroke="#000" stroke-width="4.5" stroke-linejoin="round" paint-order="stroke"  textLength="50" lengthAdjust="spacingAndGlyphs">Grids</text><text x="680" y="754.5" font-family="Liberation Sans,sans-serif" font-size="20.5" fill="#fff" stroke="#b9b9d6" stroke-width="3.2" stroke-linejoin="round" paint-order="stroke"  textLength="85.4" lengthAdjust="spacingAndGlyphs">Line hits</text><defs><clipPath id="lcl"><path d="M1400 389.300L1640 470V620H1400Z"/></clipPath></defs><text x="1577" y="453.5" font-family="Liberation Sans,sans-serif" font-size="34" fill="#fff" stroke="#c9744a" stroke-width="6.5" stroke-linejoin="round" paint-order="stroke" >Lines</text><g clip-path="url(#lcl)"><text x="1577" y="453.5" font-family="Liberation Sans,sans-serif" font-size="34" fill="#fff" stroke="#000" stroke-width="6.5" stroke-linejoin="round" paint-order="stroke" >Lines</text></g><defs><clipPath id="wc"><rect x="-5" y="-25" width="102.500" height="40"/></clipPath></defs><g transform="translate(1016.500 879) rotate(46.500)"><text clip-path="url(#wc)" x="0" y="0" font-family="Liberation Sans,sans-serif" font-size="20.600" font-weight="700" fill="#fbd3da" stroke="#ec8fa0" stroke-width="2.200" paint-order="stroke">World with</text></g><text transform="translate(1013 956) rotate(-125)" font-family="Liberation Sans,sans-serif" font-size="8.500" font-weight="700" fill="#f01040" stroke="#400" stroke-width="1" paint-order="stroke">Text</text><circle cx="1567.5" cy="150" r="7.5" fill="#b8304a" stroke="#e04060" stroke-width="1" opacity="0.95"/><circle cx="1610.3" cy="151.3" r="7.5" fill="#3a70b4" stroke="#4a8ad8" stroke-width="1" opacity="0.95"/><circle cx="1587.7" cy="187.5" r="7.5" fill="#7c9a18" stroke="#8fb020" stroke-width="1" opacity="0.95"/><path d="M1587.7 164.5L1565.4 178" stroke="#2a86f0" stroke-width="2.6" stroke-linecap="butt"/><path d="M1587.7 164.5L1607.9 179.8" stroke="#f03456" stroke-width="2.6" stroke-linecap="butt"/><path d="M1587.7 164.5L1587.7 142.5" stroke="#8ad000" stroke-width="2.6" stroke-linecap="butt"/><circle cx="1565.4" cy="178" r="8.5" fill="#2a86f0" stroke="none" stroke-width="0"/><circle cx="1607.9" cy="179.8" r="8.5" fill="#f03456" stroke="none" stroke-width="0"/><circle cx="1587.7" cy="142.5" r="8.5" fill="#8ad000" stroke="none" stroke-width="0"/><text x="1587.7" y="146.8" text-anchor="middle" font-family="Liberation Sans,sans-serif" font-size="12" fill="#141414">Y</text><text x="1607.9" y="184.10000000000002" text-anchor="middle" font-family="Liberation Sans,sans-serif" font-size="12" fill="#141414">X</text><text x="1565.4" y="182.3" text-anchor="middle" font-family="Liberation Sans,sans-serif" font-size="12" fill="#141414">Z</text></g><rect x="283" y="116" width="1354" height="848" fill="none" stroke="#bf7a2c" stroke-width="2"/></svg><div class="a" style="left:292px;top:125px;width:104px;height:28px;background:rgba(60,64,72,.62);border-radius:3px"></div><svg class="ic" style="left:296px;top:131px" width="16" height="16" viewBox="0 0 16 16"><circle cx="8" cy="2.500" r="1.700" fill="#e0e0e0"/><circle cx="8" cy="8" r="1.700" fill="#e0e0e0"/><circle cx="8" cy="13.500" r="1.700" fill="#e0e0e0"/></svg><div class="t" style="left:316px;top:129px;color:#d4d6da">Perspective</div><div class="hud" style="left:290px;top:642px;height:20px;line-height:20px;font-size:14.3px;letter-spacing:-0.05px"><span>Some delayed text : </span><span style="color:#0c0c0c">for 2.5s</span></div><div class="hud" style="left:290px;top:662px;height:20px;line-height:20px;font-size:14.3px;letter-spacing:-0.05px">FPS : <span style="color:#ffd21e">134.00</span></div><div class="hud" style="left:290px;top:682px;height:20px;line-height:20px;font-size:14.3px;letter-spacing:-0.05px"><span style="color:#f6f1da">-- Second Group --</span></div><div class="hud" style="left:290px;top:702px;height:20px;line-height:20px;font-size:14.3px;letter-spacing:-0.05px"><span style="color:#f6f1da">Rendered frames : 4647</span></div><div class="hud" style="left:290px;top:723px;height:24px;line-height:24px;font-size:19.6px;letter-spacing:-0.2px"><span style="color:#3fd23f">-- First Group --</span></div><div class="hud" style="left:290px;top:748px;height:22.5px;line-height:22.5px;font-size:16.1px;letter-spacing:0px"><span style="color:#3fd23f">Text out of order</span></div><div class="hud" style="left:290px;top:771px;height:22.5px;line-height:22.5px;font-size:16.1px;letter-spacing:0px"><span style="color:#3fd23f">Simple text</span></div><div class="hud" style="left:290px;top:794px;height:22.5px;line-height:22.5px;font-size:16.1px;letter-spacing:0px"><span style="color:#3fd23f">Text : </span><span style="color:#7ffbd2">Value</span></div><div class="hud" style="left:290px;top:817px;height:20px;line-height:20px;font-size:14.3px;letter-spacing:-0.05px">Alt: change render layers : 1</div><div class="hud" style="left:290px;top:837px;height:20px;line-height:20px;font-size:14.3px;letter-spacing:-0.05px">Ctrl: toggle anti-aliasing : Disabled</div><div class="hud" style="left:290px;top:857px;height:20px;line-height:20px;font-size:14.3px;letter-spacing:-0.05px">Down: freeze render : false</div><div class="hud" style="left:290px;top:877px;height:20px;line-height:20px;font-size:14.3px;letter-spacing:-0.05px">Up: use scene camera : false</div><div class="hud" style="left:290px;top:897px;height:20px;line-height:20px;font-size:14.3px;letter-spacing:-0.05px">1,2,3: toggle debug : true, true <span class="emo">😐</span>, true <span class="emo">😏</span></div><div class="hud" style="left:290px;top:917px;height:20px;line-height:20px;font-size:14.3px;letter-spacing:-0.05px">Left: toggle frustum culling : true</div><div class="hud" style="left:290px;top:937px;height:20px;line-height:20px;font-size:14.3px;letter-spacing:-0.05px">Right: draw bounds for culling : false</div>
<div class="dock" style="left:282px;top:970px;width:1356px;height:39px;"></div>
<div class="t " style="left:292px;top:980px;color:#b4b6bb">Output</div>
<div class="t " style="left:355px;top:980px;color:#b4b6bb">Debugger</div>
<div class="t " style="left:438px;top:980px;color:#b4b6bb">Audio</div>
<div class="t " style="left:493px;top:980px;color:#b4b6bb">Animation</div>
<div class="t " style="left:577px;top:980px;color:#b4b6bb">Shader Editor</div>
<div class="t " style="left:683px;top:980px;color:#b4b6bb">MSBuild</div>
<div class="t " style="left:1540px;top:980px;color:#8a8d93">4.3.1.rc.mono</div>
<svg class="ic" style="left:1515px;top:982px" width="16" height="16" viewBox="0 0 16 16" ><path d="M8 2c-2 0-4 1.500-4 4v3l-2 3h7l1 2 2-2h2l-2-3V6c0-2.500-2-4-4-4z" fill="#4d525c"/></svg>
<div class="dock" style="left:1642px;top:49px;width:270px;height:960px;"></div>
<div class="tabbar" style="left:1642px;top:49px;width:270px;height:28px;"></div>
<div class="tab" style="left:1642px;top:49px;width:85px;height:28px;"></div>
<div class="t " style="left:1652px;top:53px;">Inspector</div>
<div class="t " style="left:1738px;top:53px;color:#85888f">Node</div>
<div class="t " style="left:1796px;top:53px;color:#85888f">History</div>
<svg class="ic" style="left:1895px;top:55px" width="16" height="16" viewBox="0 0 16 16" ><circle cx="8" cy="2" r="1.900" fill="#a0a3a9"/><circle cx="8" cy="8" r="1.900" fill="#a0a3a9"/><circle cx="8" cy="14" r="1.900" fill="#a0a3a9"/></svg>
<svg class="ic" style="left:1652px;top:88px" width="16" height="16" viewBox="0 0 16 16" ><path d="M3 1h6l4 4v5h-2v2h-2v2h2v1H3zM9 1.500V5h3.500z" fill="#e0e0e0" fill-rule="evenodd"/><path d="M12 10v2h-2v1.600h2v2h1.600v-2h2V12h-2v-2z" fill="#5fd35f"/></svg>
<svg class="ic" style="left:1684px;top:88px" width="16" height="16" viewBox="0 0 16 16" ><path d="M1.500 3.500a1 1 0 0 1 1-1h3.300l1.500 1.700h4.700a1 1 0 0 1 1 1V6H5L2.500 12.500z" fill="#e0e0e0"/><path d="M5.500 7h10l-2.300 7H2.800z" fill="#e0e0e0"/></svg>
<svg class="ic" style="left:1716px;top:88px" width="16" height="16" viewBox="0 0 16 16" ><path d="M2 2h9.500L14 4.500V14H2zm2.500 1v3.500h6V3zM8 9a2 2 0 1 0 0 4 2 2 0 0 0 0-4z" fill="#6e727b" fill-rule="evenodd"/></svg>
<svg class="ic" style="left:1748px;top:88px" width="16" height="16" viewBox="0 0 16 16" ><circle cx="8" cy="2" r="1.900" fill="#e0e0e0"/><circle cx="8" cy="8" r="1.900" fill="#e0e0e0"/><circle cx="8" cy="14" r="1.900" fill="#e0e0e0"/></svg>
<svg class="ic" style="left:1834px;top:88px" width="16" height="16" viewBox="0 0 16 16" ><path d="M10 2.500L5.500 8l4.500 5.500" fill="none" stroke="#8a8d94" stroke-width="1.600" stroke-linecap="round" stroke-linejoin="round"/></svg>
<svg class="ic" style="left:1858px;top:88px" width="16" height="16" viewBox="0 0 16 16" ><path d="M6 2.500L10.500 8 6 13.500" fill="none" stroke="#8a8d94" stroke-width="1.600" stroke-linecap="round" stroke-linejoin="round"/></svg>
<svg class="ic" style="left:1886px;top:88px" width="16" height="16" viewBox="0 0 16 16" ><path d="M3.200 10.500A5.500 5.500 0 1 0 4 4.500" fill="none" stroke="#8a8d94" stroke-width="1.800"/><path d="M1 7l3.500 .5L2.500 3.500z" fill="#8a8d94"/><path d="M8.500 5v3.500H11" fill="none" stroke="#8a8d94" stroke-width="1.600"/></svg>
<div class="a" style="left:1646px;top:113px;width:230px;height:30px;background:#2a2f3a;border-radius:3px;border-bottom:2px solid #262a33"></div>
<svg class="ic" style="left:1886px;top:120px" width="16" height="16" viewBox="0 0 16 16" ><circle cx="10" cy="4" r="2.800" fill="none" stroke="#8a8d94" stroke-width="1.800"/><path d="M8 6l-3 3" stroke="#8a8d94" stroke-width="1.800"/><text x="1" y="15.500" font-family="Liberation Sans,sans-serif" font-weight="700" font-size="6.500" fill="#8a8d94">DOC</text></svg>
<div class="a" style="left:1646px;top:147px;width:230px;height:29px;background:#2a2f3a;border-radius:3px;border-bottom:2px solid #20242c"></div>
<div class="t " style="left:1652px;top:151px;color:#b4b6bb">Filter Properties</div>
<svg class="ic" style="left:1853px;top:153px" width="16" height="16" viewBox="0 0 16 16" ><path d="M6.5 1.5a5 5 0 1 0 2.9 9.1l3.8 3.8 1.4-1.4-3.8-3.8a5 5 0 0 0-4.3-7.7zm0 2a3 3 0 1 1 0 6 3 3 0 0 1 0-6z" fill="#b4b6bb"/></svg>
<svg class="ic" style="left:1886px;top:153px" width="16" height="16" viewBox="0 0 16 16" ><path d="M4 1.500v6M4 7.500a2 2 0 0 0-2 2v2a2 2 0 0 0 4 0v-2a2 2 0 0 0-2-2zM12 14.500v-7M9.500 1.500v3a2.500 2.500 0 0 0 5 0v-3" fill="none" stroke="#d0d0d0" stroke-width="1.800"/></svg>
<div class="tree" style="left:1646px;top:180px;width:262px;height:825px;"></div>
</body></html>
